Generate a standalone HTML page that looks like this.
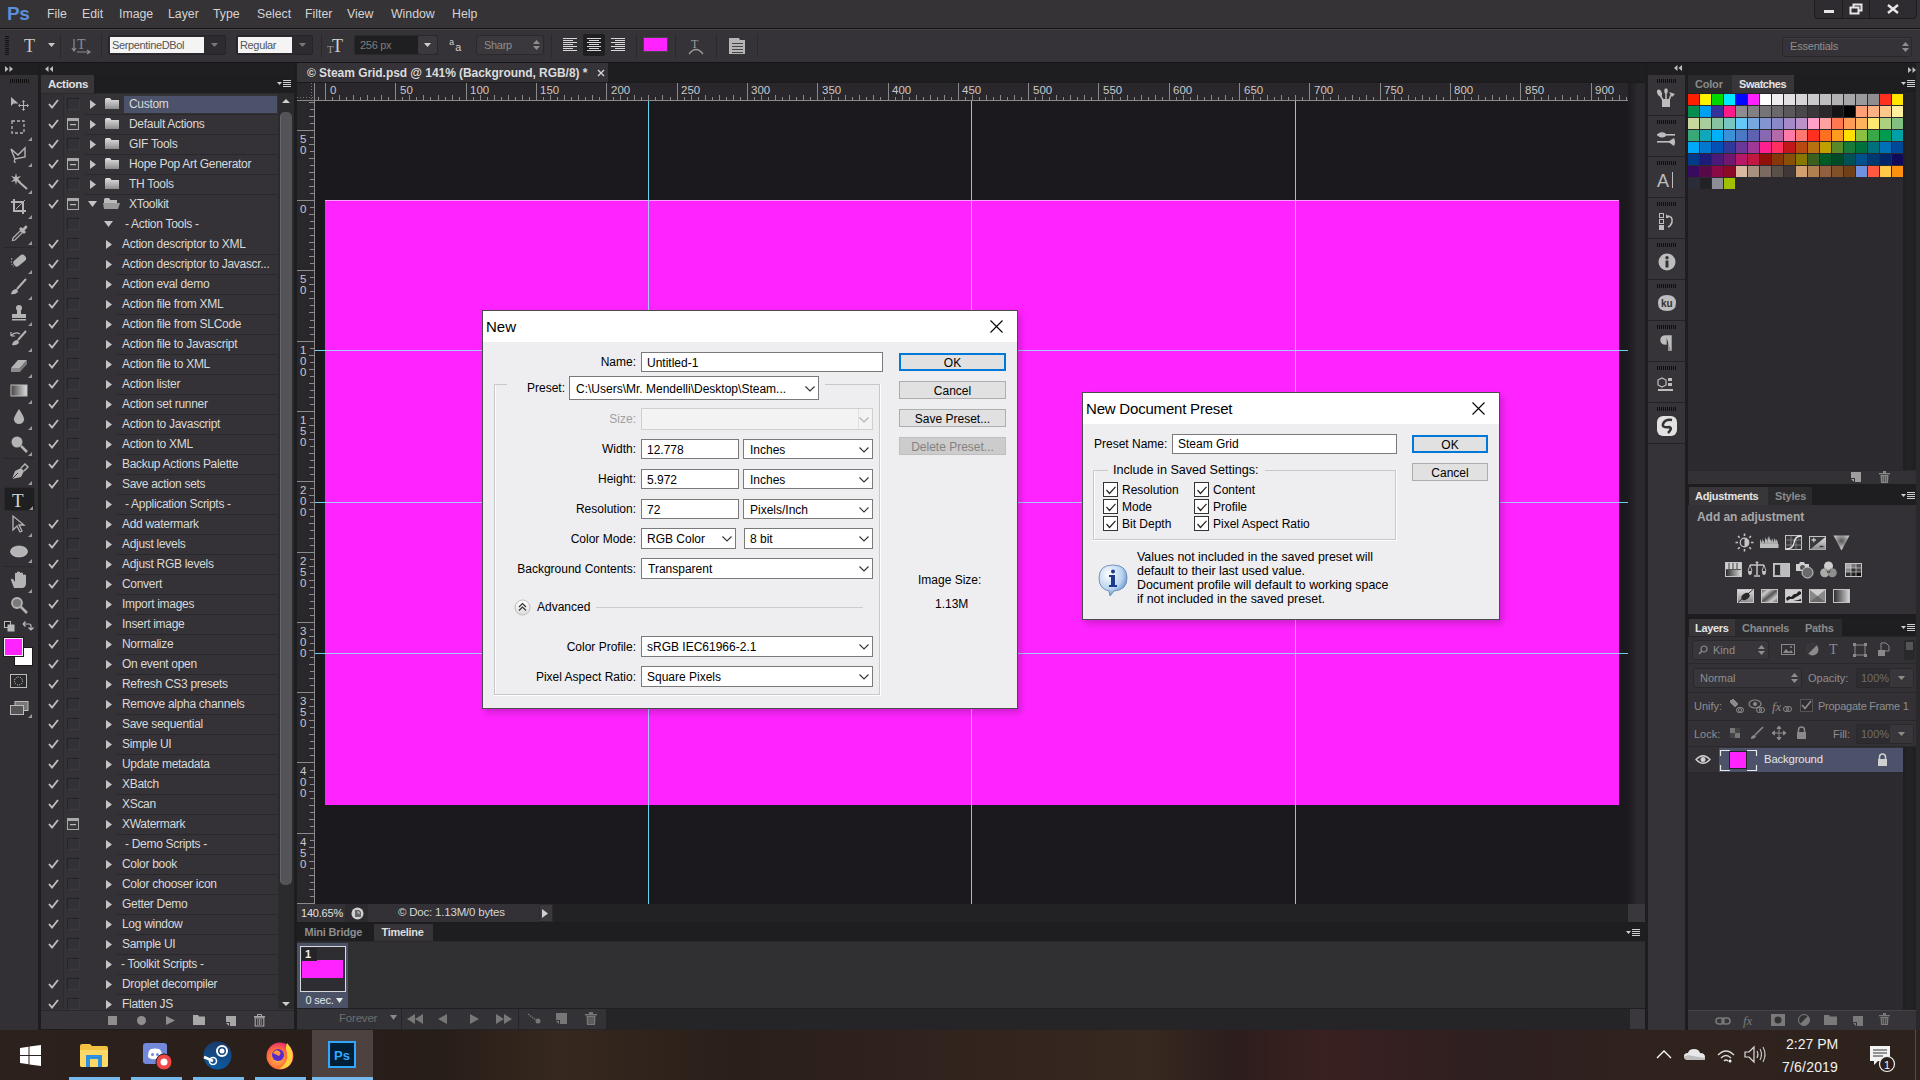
<!DOCTYPE html><html><head><meta charset="utf-8"><style>

*{margin:0;padding:0;box-sizing:border-box}
html,body{width:1920px;height:1080px;overflow:hidden;background:#323035;font-family:"Liberation Sans",sans-serif;}
.ab{position:absolute}
.t{position:absolute;white-space:nowrap;line-height:1}
svg{position:absolute;overflow:visible}

</style></head><body>
<div class="ab" style="left:0px;top:0px;width:1920px;height:28px;background:#353336;"></div>
<div class="ab" style="left:0px;top:28px;width:1920px;height:1px;background:#151316;"></div>
<div class="t" style="left:7px;top:3.92px;font-size:19px;color:#5c8fd8;font-weight:bold;letter-spacing:-0.5px">Ps</div>
<div class="t" style="left:47px;top:7.59px;font-size:12.3px;color:#d4d4d4;">File</div>
<div class="t" style="left:82px;top:7.59px;font-size:12.3px;color:#d4d4d4;">Edit</div>
<div class="t" style="left:119px;top:7.59px;font-size:12.3px;color:#d4d4d4;">Image</div>
<div class="t" style="left:168px;top:7.59px;font-size:12.3px;color:#d4d4d4;">Layer</div>
<div class="t" style="left:213px;top:7.59px;font-size:12.3px;color:#d4d4d4;">Type</div>
<div class="t" style="left:257px;top:7.59px;font-size:12.3px;color:#d4d4d4;">Select</div>
<div class="t" style="left:305px;top:7.59px;font-size:12.3px;color:#d4d4d4;">Filter</div>
<div class="t" style="left:347px;top:7.59px;font-size:12.3px;color:#d4d4d4;">View</div>
<div class="t" style="left:391px;top:7.59px;font-size:12.3px;color:#d4d4d4;">Window</div>
<div class="t" style="left:452px;top:7.59px;font-size:12.3px;color:#d4d4d4;">Help</div>
<div class="ab" style="left:1814px;top:0px;width:103px;height:19px;background:#2e2c30;border:1px solid #1c1b1e;border-top:none;border-radius:0 0 4px 4px"></div>
<div class="ab" style="left:1842px;top:0px;width:1px;height:18px;background:#1c1b1e;"></div>
<div class="ab" style="left:1869px;top:0px;width:1px;height:18px;background:#1c1b1e;"></div>
<div class="ab" style="left:1824px;top:10px;width:10px;height:3px;background:#e6e6e6;"></div>
<svg style="left:1849px;top:3px;" width="14" height="12" viewBox="0 0 14 12"><rect x="1.5" y="4.5" width="8" height="6" fill="none" stroke="#e6e6e6" stroke-width="2"/><path d="M4.5 4.5V1.5h8v6h-3" fill="none" stroke="#e6e6e6" stroke-width="2"/></svg>
<svg style="left:1887px;top:4px;" width="12" height="10" viewBox="0 0 12 10"><path d="M1 1L11 9M11 1L1 9" stroke="#e6e6e6" stroke-width="2.4"/></svg>
<div class="ab" style="left:0px;top:29px;width:1920px;height:33px;background:#353337;"></div>
<div class="ab" style="left:0px;top:29px;width:1920px;height:1px;background:#46444a;"></div>
<div class="ab" style="left:0px;top:62px;width:1920px;height:1px;background:#161417;"></div>
<div class="ab" style="left:5px;top:36px;width:4px;height:1px;background:#111;"></div>
<div class="ab" style="left:5px;top:38px;width:4px;height:1px;background:#111;"></div>
<div class="ab" style="left:5px;top:40px;width:4px;height:1px;background:#111;"></div>
<div class="ab" style="left:5px;top:42px;width:4px;height:1px;background:#111;"></div>
<div class="ab" style="left:5px;top:44px;width:4px;height:1px;background:#111;"></div>
<div class="ab" style="left:5px;top:46px;width:4px;height:1px;background:#111;"></div>
<div class="ab" style="left:5px;top:48px;width:4px;height:1px;background:#111;"></div>
<div class="ab" style="left:5px;top:50px;width:4px;height:1px;background:#111;"></div>
<div class="ab" style="left:5px;top:52px;width:4px;height:1px;background:#111;"></div>
<div class="ab" style="left:5px;top:54px;width:4px;height:1px;background:#111;"></div>
<div class="t" style="left:24px;top:36.76px;font-size:18px;color:#c9c9c9;font-family:'Liberation Serif',serif">T</div>
<svg style="left:48px;top:43px;" width="8" height="5" viewBox="0 0 8 5"><path d="M0 0H7L3.5 4Z" fill="#c9c9c9"/></svg>
<div class="ab" style="left:60px;top:34px;width:1px;height:24px;background:#2a292c;"></div>
<svg style="left:72px;top:37px;" width="20" height="18" viewBox="0 0 20 18"><text x="5" y="12" font-family="Liberation Serif" font-size="14" fill="#8c8c8c">T</text><path d="M2 2V13M0 11L2 14L4 11M5 15H17M15 13L18 15L15 17" stroke="#8c8c8c" stroke-width="1.2" fill="none"/></svg>
<div class="ab" style="left:101px;top:34px;width:1px;height:24px;background:#2a292c;"></div>
<div class="ab" style="left:108px;top:35px;width:118px;height:20px;background:#2d2b2f;border:1px solid #262428;border-radius:2px"></div>
<div class="ab" style="left:110px;top:37px;width:94px;height:16px;background:#f4f4f4;"></div>
<div class="t" style="left:112px;top:39.69px;font-size:11px;color:#545454;letter-spacing:-0.35px">SerpentineDBol</div>
<svg style="left:211px;top:43px;" width="8" height="5" viewBox="0 0 8 5"><path d="M0 0H7L3.5 4Z" fill="#777"/></svg>
<div class="ab" style="left:236px;top:35px;width:77px;height:20px;background:#2d2b2f;border:1px solid #262428;border-radius:2px"></div>
<div class="ab" style="left:238px;top:37px;width:54px;height:16px;background:#f4f4f4;"></div>
<div class="t" style="left:240px;top:39.69px;font-size:11px;color:#545454;letter-spacing:-0.35px">Regular</div>
<svg style="left:299px;top:43px;" width="8" height="5" viewBox="0 0 8 5"><path d="M0 0H7L3.5 4Z" fill="#777"/></svg>
<div class="ab" style="left:321px;top:34px;width:1px;height:24px;background:#2a292c;"></div>
<svg style="left:327px;top:37px;" width="20" height="18" viewBox="0 0 20 18"><text x="0" y="16" font-family="Liberation Serif" font-size="11" fill="#9a9a9a">T</text><text x="5" y="15" font-family="Liberation Serif" font-size="18" fill="#cfcfcf">T</text></svg>
<div class="ab" style="left:354px;top:35px;width:84px;height:20px;background:#1f1e21;border:1px solid #29282b;border-radius:2px"></div>
<div class="ab" style="left:418px;top:36px;width:19px;height:18px;background:#3b393d;border-radius:2px"></div>
<div class="t" style="left:360px;top:39.69px;font-size:11px;color:#7e7e7e;letter-spacing:-0.3px">256 px</div>
<svg style="left:424px;top:43px;" width="8" height="5" viewBox="0 0 8 5"><path d="M0 0H7L3.5 4Z" fill="#d0d0d0"/></svg>
<svg style="left:449px;top:38px;" width="16" height="14" viewBox="0 0 16 14"><text x="0" y="7" font-family="Liberation Mono" font-size="9" fill="#d0d0d0">a</text><text x="6" y="13" font-family="Liberation Mono" font-size="11" fill="#d0d0d0">a</text></svg>
<div class="ab" style="left:476px;top:35px;width:68px;height:20px;background:#3a383c;border:1px solid #29282b;border-radius:3px"></div>
<div class="t" style="left:484px;top:39.69px;font-size:11px;color:#8e8e8e;letter-spacing:-0.3px">Sharp</div>
<svg style="left:533px;top:40px;" width="8" height="11" viewBox="0 0 8 11"><path d="M0 4L3.5 0L7 4ZM0 6L3.5 10L7 6Z" fill="#8e8e8e"/></svg>
<div class="ab" style="left:551px;top:34px;width:1px;height:24px;background:#2a292c;"></div>
<div class="ab" style="left:583px;top:34px;width:22px;height:22px;background:#1f1e21;border-radius:2px"></div>
<svg style="left:563px;top:38px;" width="15" height="14" viewBox="0 0 15 14"><rect x="0" y="0" width="14" height="1" fill="#d8d8d8"/><rect x="0" y="2" width="10" height="1" fill="#d8d8d8"/><rect x="0" y="4" width="14" height="1" fill="#d8d8d8"/><rect x="0" y="6" width="10" height="1" fill="#d8d8d8"/><rect x="0" y="8" width="14" height="1" fill="#d8d8d8"/><rect x="0" y="10" width="10" height="1" fill="#d8d8d8"/><rect x="0" y="12" width="14" height="1" fill="#d8d8d8"/></svg>
<svg style="left:587px;top:38px;" width="15" height="14" viewBox="0 0 15 14"><rect x="0" y="0" width="14" height="1" fill="#d8d8d8"/><rect x="2" y="2" width="10" height="1" fill="#d8d8d8"/><rect x="0" y="4" width="14" height="1" fill="#d8d8d8"/><rect x="2" y="6" width="10" height="1" fill="#d8d8d8"/><rect x="0" y="8" width="14" height="1" fill="#d8d8d8"/><rect x="2" y="10" width="10" height="1" fill="#d8d8d8"/><rect x="0" y="12" width="14" height="1" fill="#d8d8d8"/></svg>
<svg style="left:611px;top:38px;" width="15" height="14" viewBox="0 0 15 14"><rect x="0" y="0" width="14" height="1" fill="#d8d8d8"/><rect x="4" y="2" width="10" height="1" fill="#d8d8d8"/><rect x="0" y="4" width="14" height="1" fill="#d8d8d8"/><rect x="4" y="6" width="10" height="1" fill="#d8d8d8"/><rect x="0" y="8" width="14" height="1" fill="#d8d8d8"/><rect x="4" y="10" width="10" height="1" fill="#d8d8d8"/><rect x="0" y="12" width="14" height="1" fill="#d8d8d8"/></svg>
<div class="ab" style="left:636px;top:34px;width:1px;height:24px;background:#2a292c;"></div>
<div class="ab" style="left:643px;top:37px;width:25px;height:15px;background:#ff24ff;border:1px solid #444"></div>
<div class="ab" style="left:675px;top:34px;width:1px;height:24px;background:#2a292c;"></div>
<svg style="left:687px;top:37px;" width="18" height="18" viewBox="0 0 18 18"><text x="4" y="11" font-family="Liberation Serif" font-size="12" fill="#9a9a9a">T</text><path d="M2 17Q9 8 16 17" stroke="#9a9a9a" stroke-width="1.3" fill="none"/></svg>
<div class="ab" style="left:716px;top:34px;width:1px;height:24px;background:#2a292c;"></div>
<svg style="left:728px;top:37px;" width="18" height="18" viewBox="0 0 18 18"><path d="M1 1H11L12 3H17V17H1Z" fill="#b5b5b5"/><rect x="4" y="6" width="11" height="1" fill="#444"/><rect x="4" y="9" width="11" height="1" fill="#444"/><rect x="4" y="12" width="11" height="1" fill="#444"/><rect x="4" y="15" width="11" height="1" fill="#444"/></svg>
<div class="ab" style="left:757px;top:34px;width:1px;height:24px;background:#2a292c;"></div>
<div class="ab" style="left:1782px;top:37px;width:130px;height:20px;background:#353337;border:1px solid #28272a;border-radius:3px;box-shadow:inset 0 1px 0 #3e3c40"></div>
<div class="t" style="left:1790px;top:41.19px;font-size:11px;color:#8f8f8f;letter-spacing:-0.2px">Essentials</div>
<svg style="left:1902px;top:42px;" width="7" height="11" viewBox="0 0 7 11"><path d="M0 4L3.5 0L7 4ZM0 6L3.5 10L7 6Z" fill="#8e8e8e"/></svg>
<div class="ab" style="left:0px;top:63px;width:297px;height:12px;background:#1f1e21;"></div>
<svg style="left:5px;top:66px;" width="9" height="6" viewBox="0 0 9 6"><path d="M0 0L3.5 3L0 6ZM4.5 0L8 3L4.5 6Z" fill="#bdbdbd"/></svg>
<svg style="left:45px;top:66px;" width="9" height="6" viewBox="0 0 9 6"><path d="M3.5 0L0 3L3.5 6ZM8 0L4.5 3L8 6Z" fill="#bdbdbd"/></svg>
<div class="ab" style="left:1648px;top:63px;width:272px;height:12px;background:#1f1e21;"></div>
<svg style="left:1674px;top:65px;" width="9" height="6" viewBox="0 0 9 6"><path d="M3.5 0L0 3L3.5 6ZM8 0L4.5 3L8 6Z" fill="#bdbdbd"/></svg>
<svg style="left:1908px;top:67px;" width="9" height="6" viewBox="0 0 9 6"><path d="M0 0L3.5 3L0 6ZM4.5 0L8 3L4.5 6Z" fill="#bdbdbd"/></svg>
<div class="ab" style="left:0px;top:75px;width:38px;height:955px;background:#323035;"></div>
<div class="ab" style="left:38px;top:63px;width:3px;height:967px;background:#1d1c1f;"></div>
<div class="ab" style="left:10px;top:79px;width:1px;height:4px;background:#0e0e0e;"></div>
<div class="ab" style="left:12px;top:79px;width:1px;height:4px;background:#0e0e0e;"></div>
<div class="ab" style="left:14px;top:79px;width:1px;height:4px;background:#0e0e0e;"></div>
<div class="ab" style="left:16px;top:79px;width:1px;height:4px;background:#0e0e0e;"></div>
<div class="ab" style="left:18px;top:79px;width:1px;height:4px;background:#0e0e0e;"></div>
<div class="ab" style="left:20px;top:79px;width:1px;height:4px;background:#0e0e0e;"></div>
<div class="ab" style="left:22px;top:79px;width:1px;height:4px;background:#0e0e0e;"></div>
<div class="ab" style="left:24px;top:79px;width:1px;height:4px;background:#0e0e0e;"></div>
<div class="ab" style="left:26px;top:79px;width:1px;height:4px;background:#0e0e0e;"></div>
<div class="ab" style="left:28px;top:79px;width:1px;height:4px;background:#0e0e0e;"></div>
<svg style="left:10px;top:96px;" width="20" height="16" viewBox="0 0 20 16"><path d="M1 1V10L3.5 7.5H8.5Z" fill="#b4b4b4"/><path d="M13.5 5V14M9 9.5H18" stroke="#b4b4b4" stroke-width="1.1"/><path d="M13.5 4L11.8 6H15.2ZM13.5 15L11.8 13H15.2ZM8 9.5L10 7.8V11.2ZM19 9.5L17 7.8V11.2Z" fill="#b4b4b4"/></svg>
<svg style="left:11px;top:120px;" width="15" height="15" viewBox="0 0 15 15"><rect x="1" y="1" width="12" height="12" fill="none" stroke="#b4b4b4" stroke-width="1.3" stroke-dasharray="3 2"/></svg>
<svg style="left:28px;top:137px;" width="4" height="4" viewBox="0 0 4 4"><path d="M4 0V4H0Z" fill="#9a9a9a"/></svg>
<svg style="left:10px;top:146px;" width="18" height="17" viewBox="0 0 18 17"><path d="M1 3L8 9L15 2L15 11L5 13Z" fill="none" stroke="#b4b4b4" stroke-width="1.4"/><path d="M5 13Q3 17 6 16" fill="none" stroke="#b4b4b4" stroke-width="1.2"/></svg>
<svg style="left:28px;top:163px;" width="4" height="4" viewBox="0 0 4 4"><path d="M4 0V4H0Z" fill="#9a9a9a"/></svg>
<svg style="left:9px;top:172px;" width="20" height="18" viewBox="0 0 20 18"><path d="M7 1L8 5L12 4L9 7L12 10L8 9L7 13L6 9L2 10L5 7L2 4L6 5Z" fill="#b4b4b4"/><path d="M9 9L18 17" stroke="#b4b4b4" stroke-width="2"/></svg>
<svg style="left:28px;top:190px;" width="4" height="4" viewBox="0 0 4 4"><path d="M4 0V4H0Z" fill="#9a9a9a"/></svg>
<svg style="left:10px;top:198px;" width="18" height="17" viewBox="0 0 18 17"><path d="M4 1V13H16M1 4H13V16" fill="none" stroke="#b4b4b4" stroke-width="2"/><path d="M6 11L15 2" stroke="#b4b4b4" stroke-width="1"/></svg>
<svg style="left:28px;top:215px;" width="4" height="4" viewBox="0 0 4 4"><path d="M4 0V4H0Z" fill="#9a9a9a"/></svg>
<svg style="left:11px;top:224px;" width="17" height="17" viewBox="0 0 17 17"><path d="M2 14L9.5 6.5L11.5 8.5L4 16L1.5 16.5Z" fill="none" stroke="#b4b4b4" stroke-width="1.2"/><path d="M8 5L10 3L15 8L13 10Z" fill="#b4b4b4"/><path d="M11 5L13.5 2.5Q15 1 16 2Q17 3 15.5 4.5L13 7Z" fill="#b4b4b4"/></svg>
<svg style="left:28px;top:241px;" width="4" height="4" viewBox="0 0 4 4"><path d="M4 0V4H0Z" fill="#9a9a9a"/></svg>
<div class="ab" style="left:4px;top:247px;width:31px;height:1px;background:#28272a;"></div>
<svg style="left:9px;top:252px;" width="20" height="18" viewBox="0 0 20 18"><rect x="4" y="5" width="14" height="7" rx="3" transform="rotate(-40 11 9)" fill="#b4b4b4"/><path d="M3 6Q1 12 5 15" fill="none" stroke="#b4b4b4" stroke-width="1" stroke-dasharray="1.5 1.5"/></svg>
<svg style="left:28px;top:270px;" width="4" height="4" viewBox="0 0 4 4"><path d="M4 0V4H0Z" fill="#9a9a9a"/></svg>
<svg style="left:9px;top:278px;" width="20" height="18" viewBox="0 0 20 18"><path d="M17 1L8 11" stroke="#b4b4b4" stroke-width="2"/><path d="M8 11Q3 11 2 16Q6 17 9 14Z" fill="#b4b4b4"/></svg>
<svg style="left:28px;top:296px;" width="4" height="4" viewBox="0 0 4 4"><path d="M4 0V4H0Z" fill="#9a9a9a"/></svg>
<svg style="left:10px;top:304px;" width="18" height="18" viewBox="0 0 18 18"><circle cx="9" cy="4" r="3" fill="#b4b4b4"/><rect x="7" y="6" width="4" height="5" fill="#b4b4b4"/><rect x="2" y="10" width="14" height="4" fill="#b4b4b4"/><rect x="2" y="15" width="14" height="1.5" fill="#b4b4b4"/></svg>
<svg style="left:28px;top:322px;" width="4" height="4" viewBox="0 0 4 4"><path d="M4 0V4H0Z" fill="#9a9a9a"/></svg>
<svg style="left:9px;top:330px;" width="20" height="18" viewBox="0 0 20 18"><path d="M17 1L9 10" stroke="#b4b4b4" stroke-width="2"/><path d="M9 10Q4 10 3 15Q7 16 10 13Z" fill="#b4b4b4"/><path d="M2 6Q6 1 11 4M2 6L2 2M2 6L6 6" fill="none" stroke="#b4b4b4" stroke-width="1.2"/></svg>
<svg style="left:28px;top:348px;" width="4" height="4" viewBox="0 0 4 4"><path d="M4 0V4H0Z" fill="#9a9a9a"/></svg>
<svg style="left:10px;top:357px;" width="18" height="16" viewBox="0 0 18 16"><path d="M1 11L8 3H17L10 11Z" fill="#b4b4b4"/><path d="M1 11H10V15H1Z" fill="#8a8a8a"/><path d="M10 11L17 3V7L10 15Z" fill="#7a7a7a"/></svg>
<svg style="left:28px;top:374px;" width="4" height="4" viewBox="0 0 4 4"><path d="M4 0V4H0Z" fill="#9a9a9a"/></svg>
<svg style="left:10px;top:384px;" width="18" height="14" viewBox="0 0 18 14"><defs><linearGradient id="gr" x1="0" x2="1"><stop offset="0" stop-color="#444"/><stop offset="1" stop-color="#ddd"/></linearGradient></defs><rect x="1" y="1" width="16" height="11" fill="url(#gr)" stroke="#bbb" stroke-width="1"/></svg>
<svg style="left:28px;top:400px;" width="4" height="4" viewBox="0 0 4 4"><path d="M4 0V4H0Z" fill="#9a9a9a"/></svg>
<svg style="left:12px;top:408px;" width="14" height="17" viewBox="0 0 14 17"><path d="M7 1Q1 10 2 12Q3 16 7 16Q11 16 12 12Q13 10 7 1Z" fill="#b4b4b4"/></svg>
<svg style="left:28px;top:426px;" width="4" height="4" viewBox="0 0 4 4"><path d="M4 0V4H0Z" fill="#9a9a9a"/></svg>
<svg style="left:10px;top:435px;" width="19" height="18" viewBox="0 0 19 18"><circle cx="7" cy="7" r="5.5" fill="#b4b4b4"/><path d="M11 11L17 17" stroke="#b4b4b4" stroke-width="2.5"/></svg>
<svg style="left:28px;top:452px;" width="4" height="4" viewBox="0 0 4 4"><path d="M4 0V4H0Z" fill="#9a9a9a"/></svg>
<div class="ab" style="left:4px;top:458px;width:31px;height:1px;background:#28272a;"></div>
<svg style="left:10px;top:463px;" width="19" height="18" viewBox="0 0 19 18"><path d="M2 16L5 8L11 5L14 8L11 14Z" fill="#b4b4b4"/><path d="M11 5L15 1L18 4L14 8" fill="none" stroke="#b4b4b4" stroke-width="1.5"/><path d="M2 16L8 10" stroke="#333" stroke-width="1"/></svg>
<svg style="left:28px;top:481px;" width="4" height="4" viewBox="0 0 4 4"><path d="M4 0V4H0Z" fill="#9a9a9a"/></svg>
<div class="ab" style="left:4px;top:487px;width:31px;height:24px;background:#1f1e21;border-radius:2px;border:1px solid #2a292c"></div>
<div class="t" style="left:12px;top:490.92px;font-size:19px;color:#d6d6d6;font-family:'Liberation Serif',serif">T</div>
<svg style="left:29px;top:506px;" width="4" height="4" viewBox="0 0 4 4"><path d="M4 0V4H0Z" fill="#9a9a9a"/></svg>
<svg style="left:12px;top:515px;" width="14" height="18" viewBox="0 0 14 18"><path d="M1 1V15L5 11L8 17L10 16L7 10L12 10Z" fill="none" stroke="#b4b4b4" stroke-width="1.3"/></svg>
<svg style="left:28px;top:533px;" width="4" height="4" viewBox="0 0 4 4"><path d="M4 0V4H0Z" fill="#9a9a9a"/></svg>
<svg style="left:9px;top:545px;" width="20" height="13" viewBox="0 0 20 13"><ellipse cx="10" cy="6.5" rx="8.5" ry="5.5" fill="#b4b4b4" stroke="#ddd" stroke-width="0.6"/></svg>
<svg style="left:28px;top:559px;" width="4" height="4" viewBox="0 0 4 4"><path d="M4 0V4H0Z" fill="#9a9a9a"/></svg>
<div class="ab" style="left:4px;top:566px;width:31px;height:1px;background:#28272a;"></div>
<svg style="left:10px;top:571px;" width="19" height="18" viewBox="0 0 19 18"><path d="M4 17L1 9Q1 7 3 8L5 11V3Q5 1 7 2V9V1Q8 0 10 1V9V2Q11 1 13 2V10V4Q14 3 16 4V12Q16 16 13 17Z" fill="#b4b4b4"/></svg>
<svg style="left:28px;top:589px;" width="4" height="4" viewBox="0 0 4 4"><path d="M4 0V4H0Z" fill="#9a9a9a"/></svg>
<svg style="left:10px;top:596px;" width="19" height="18" viewBox="0 0 19 18"><circle cx="7" cy="7" r="5" fill="#7a7a7a" stroke="#b4b4b4" stroke-width="1.8"/><path d="M11 11L17 17" stroke="#b4b4b4" stroke-width="2.5"/></svg>
<svg style="left:4px;top:621px;" width="11" height="11" viewBox="0 0 11 11"><rect x="0.5" y="0.5" width="6" height="6" fill="#222" stroke="#bbb"/><rect x="4" y="4" width="6" height="6" fill="#bbb" stroke="#bbb"/></svg>
<svg style="left:22px;top:620px;" width="11" height="12" viewBox="0 0 11 12"><path d="M1 4H7Q9 4 9 6V10M1 4L3.5 1.5M1 4L3.5 6.5M9 10L6.5 7.5M9 10L11.5 7.5" fill="none" stroke="#bbb" stroke-width="1.2"/></svg>
<div class="ab" style="left:14px;top:647px;width:19px;height:19px;background:#ffffff;border:1px solid #1a1a1a"></div>
<div class="ab" style="left:4px;top:638px;width:19px;height:18px;background:#ff24ff;border:1px solid #f0f0f0;outline:1px solid #1a1a1a"></div>
<svg style="left:10px;top:674px;" width="17" height="14" viewBox="0 0 17 14"><rect x="0.5" y="0.5" width="16" height="13" fill="#2a292c" stroke="#bbb"/><circle cx="8.5" cy="7" r="4" fill="none" stroke="#ddd" stroke-dasharray="1 1.2"/></svg>
<svg style="left:10px;top:701px;" width="19" height="15" viewBox="0 0 19 15"><rect x="5" y="0.5" width="13" height="9" fill="#777" stroke="#bbb"/><rect x="0.5" y="4.5" width="13" height="9" fill="#555" stroke="#bbb"/></svg>
<svg style="left:28px;top:714px;" width="4" height="4" viewBox="0 0 4 4"><path d="M4 0V4H0Z" fill="#9a9a9a"/></svg>
<div class="ab" style="left:41px;top:75px;width:253px;height:955px;background:#343236;"></div>
<div class="ab" style="left:94px;top:75px;width:200px;height:18px;background:#1e1d20;"></div>
<div class="ab" style="left:41px;top:75px;width:53px;height:18px;background:#383639;"></div>
<div class="t" style="left:48px;top:79.07px;font-size:11.5px;color:#e0e0e0;font-weight:bold;letter-spacing:-0.3px">Actions</div>
<svg style="left:277px;top:80px;" width="14" height="9" viewBox="0 0 14 9"><path d="M0 2H5L2.5 5Z" fill="#cfcfcf"/><rect x="6" y="0" width="8" height="1" fill="#cfcfcf"/><rect x="6" y="2" width="8" height="1" fill="#cfcfcf"/><rect x="6" y="4" width="8" height="1" fill="#cfcfcf"/><rect x="6" y="6" width="8" height="1" fill="#cfcfcf"/></svg>
<div class="ab" style="left:41px;top:93px;width:253px;height:1px;background:#2a292c;"></div>
<div class="ab" style="left:41px;top:94px;width:22px;height:915px;background:#323035;"></div>
<div class="ab" style="left:63px;top:94px;width:1px;height:915px;background:#2b2a2d;"></div>
<div class="ab" style="left:124px;top:96px;width:153px;height:17px;background:#4b5269;"></div>
<div class="ab" style="left:85px;top:114px;width:192px;height:1px;background:#28272a;"></div>
<svg style="left:48px;top:99px;" width="11" height="10" viewBox="0 0 11 10"><path d="M1 5L4 8.5L10 1" fill="none" stroke="#bdbdbd" stroke-width="1.9"/></svg>
<div class="ab" style="left:67px;top:98px;width:13px;height:12px;background:#323135;border:1px solid #242327;border-right-color:#3a393d;border-bottom-color:#3a393d"></div>
<svg style="left:90px;top:100px;" width="7" height="10" viewBox="0 0 7 10"><path d="M0 0L6 4.5L0 9Z" fill="#c4c4c4"/></svg>
<svg style="left:105px;top:98px;" width="15" height="12" viewBox="0 0 15 12"><defs><linearGradient id="fg" x1="0" y1="0" x2="0" y2="1"><stop offset="0" stop-color="#e0e0e0"/><stop offset="1" stop-color="#8e8e8e"/></linearGradient></defs><path d="M0 1.5Q0 0 1.5 0H5L6.5 2H14V11H0Z" fill="url(#fg)"/></svg>
<div class="t" style="left:129px;top:98.34px;font-size:12px;color:#d9d9d9;letter-spacing:-0.3px">Custom</div>
<div class="ab" style="left:85px;top:134px;width:192px;height:1px;background:#28272a;"></div>
<svg style="left:48px;top:119px;" width="11" height="10" viewBox="0 0 11 10"><path d="M1 5L4 8.5L10 1" fill="none" stroke="#bdbdbd" stroke-width="1.9"/></svg>
<svg style="left:67px;top:118px;" width="13" height="12" viewBox="0 0 13 12"><rect x="0.5" y="0.5" width="11" height="11" fill="#3a393d" stroke="#aaa"/><rect x="0.5" y="0.5" width="11" height="2.5" fill="#aaa"/><rect x="3" y="6" width="6" height="1.2" fill="#bbb"/></svg>
<svg style="left:90px;top:120px;" width="7" height="10" viewBox="0 0 7 10"><path d="M0 0L6 4.5L0 9Z" fill="#c4c4c4"/></svg>
<svg style="left:105px;top:118px;" width="15" height="12" viewBox="0 0 15 12"><defs><linearGradient id="fg" x1="0" y1="0" x2="0" y2="1"><stop offset="0" stop-color="#e0e0e0"/><stop offset="1" stop-color="#8e8e8e"/></linearGradient></defs><path d="M0 1.5Q0 0 1.5 0H5L6.5 2H14V11H0Z" fill="url(#fg)"/></svg>
<div class="t" style="left:129px;top:118.34px;font-size:12px;color:#d9d9d9;letter-spacing:-0.3px">Default Actions</div>
<div class="ab" style="left:85px;top:154px;width:192px;height:1px;background:#28272a;"></div>
<svg style="left:48px;top:139px;" width="11" height="10" viewBox="0 0 11 10"><path d="M1 5L4 8.5L10 1" fill="none" stroke="#bdbdbd" stroke-width="1.9"/></svg>
<div class="ab" style="left:67px;top:138px;width:13px;height:12px;background:#323135;border:1px solid #242327;border-right-color:#3a393d;border-bottom-color:#3a393d"></div>
<svg style="left:90px;top:140px;" width="7" height="10" viewBox="0 0 7 10"><path d="M0 0L6 4.5L0 9Z" fill="#c4c4c4"/></svg>
<svg style="left:105px;top:138px;" width="15" height="12" viewBox="0 0 15 12"><defs><linearGradient id="fg" x1="0" y1="0" x2="0" y2="1"><stop offset="0" stop-color="#e0e0e0"/><stop offset="1" stop-color="#8e8e8e"/></linearGradient></defs><path d="M0 1.5Q0 0 1.5 0H5L6.5 2H14V11H0Z" fill="url(#fg)"/></svg>
<div class="t" style="left:129px;top:138.34px;font-size:12px;color:#d9d9d9;letter-spacing:-0.3px">GIF Tools</div>
<div class="ab" style="left:85px;top:174px;width:192px;height:1px;background:#28272a;"></div>
<svg style="left:48px;top:159px;" width="11" height="10" viewBox="0 0 11 10"><path d="M1 5L4 8.5L10 1" fill="none" stroke="#bdbdbd" stroke-width="1.9"/></svg>
<svg style="left:67px;top:158px;" width="13" height="12" viewBox="0 0 13 12"><rect x="0.5" y="0.5" width="11" height="11" fill="#3a393d" stroke="#aaa"/><rect x="0.5" y="0.5" width="11" height="2.5" fill="#aaa"/><rect x="3" y="6" width="6" height="1.2" fill="#bbb"/></svg>
<svg style="left:90px;top:160px;" width="7" height="10" viewBox="0 0 7 10"><path d="M0 0L6 4.5L0 9Z" fill="#c4c4c4"/></svg>
<svg style="left:105px;top:158px;" width="15" height="12" viewBox="0 0 15 12"><defs><linearGradient id="fg" x1="0" y1="0" x2="0" y2="1"><stop offset="0" stop-color="#e0e0e0"/><stop offset="1" stop-color="#8e8e8e"/></linearGradient></defs><path d="M0 1.5Q0 0 1.5 0H5L6.5 2H14V11H0Z" fill="url(#fg)"/></svg>
<div class="t" style="left:129px;top:158.34px;font-size:12px;color:#d9d9d9;letter-spacing:-0.3px">Hope Pop Art Generator</div>
<div class="ab" style="left:85px;top:194px;width:192px;height:1px;background:#28272a;"></div>
<svg style="left:48px;top:179px;" width="11" height="10" viewBox="0 0 11 10"><path d="M1 5L4 8.5L10 1" fill="none" stroke="#bdbdbd" stroke-width="1.9"/></svg>
<div class="ab" style="left:67px;top:178px;width:13px;height:12px;background:#323135;border:1px solid #242327;border-right-color:#3a393d;border-bottom-color:#3a393d"></div>
<svg style="left:90px;top:180px;" width="7" height="10" viewBox="0 0 7 10"><path d="M0 0L6 4.5L0 9Z" fill="#c4c4c4"/></svg>
<svg style="left:105px;top:178px;" width="15" height="12" viewBox="0 0 15 12"><defs><linearGradient id="fg" x1="0" y1="0" x2="0" y2="1"><stop offset="0" stop-color="#e0e0e0"/><stop offset="1" stop-color="#8e8e8e"/></linearGradient></defs><path d="M0 1.5Q0 0 1.5 0H5L6.5 2H14V11H0Z" fill="url(#fg)"/></svg>
<div class="t" style="left:129px;top:178.34px;font-size:12px;color:#d9d9d9;letter-spacing:-0.3px">TH Tools</div>
<svg style="left:48px;top:199px;" width="11" height="10" viewBox="0 0 11 10"><path d="M1 5L4 8.5L10 1" fill="none" stroke="#bdbdbd" stroke-width="1.9"/></svg>
<svg style="left:67px;top:198px;" width="13" height="12" viewBox="0 0 13 12"><rect x="0.5" y="0.5" width="11" height="11" fill="#3a393d" stroke="#aaa"/><rect x="0.5" y="0.5" width="11" height="2.5" fill="#aaa"/><rect x="3" y="6" width="6" height="1.2" fill="#bbb"/></svg>
<svg style="left:88px;top:201px;" width="10" height="7" viewBox="0 0 10 7"><path d="M0 0H9L4.5 6Z" fill="#c4c4c4"/></svg>
<svg style="left:103px;top:198px;" width="17" height="12" viewBox="0 0 17 12"><path d="M1 1.5Q1 0 2.5 0H6L7.5 2H14V5H1Z" fill="#bbb"/><path d="M0 5H17L15 11H1Z" fill="#9a9a9a"/></svg>
<div class="t" style="left:129px;top:198.34px;font-size:12px;color:#d9d9d9;letter-spacing:-0.3px">XToolkit</div>
<div class="ab" style="left:67px;top:218px;width:13px;height:12px;background:#323135;border:1px solid #242327;border-right-color:#3a393d;border-bottom-color:#3a393d"></div>
<svg style="left:104px;top:221px;" width="10" height="7" viewBox="0 0 10 7"><path d="M0 0H9L4.5 6Z" fill="#c4c4c4"/></svg>
<div class="t" style="left:125px;top:218.34px;font-size:12px;color:#d9d9d9;letter-spacing:-0.3px">- Action Tools -</div>
<div class="ab" style="left:117px;top:254px;width:160px;height:1px;background:#28272a;"></div>
<svg style="left:48px;top:239px;" width="11" height="10" viewBox="0 0 11 10"><path d="M1 5L4 8.5L10 1" fill="none" stroke="#bdbdbd" stroke-width="1.9"/></svg>
<div class="ab" style="left:67px;top:238px;width:13px;height:12px;background:#323135;border:1px solid #242327;border-right-color:#3a393d;border-bottom-color:#3a393d"></div>
<svg style="left:106px;top:240px;" width="7" height="10" viewBox="0 0 7 10"><path d="M0 0L6 4.5L0 9Z" fill="#c4c4c4"/></svg>
<div class="t" style="left:122px;top:238.34px;font-size:12px;color:#d9d9d9;letter-spacing:-0.3px">Action descriptor to XML</div>
<div class="ab" style="left:117px;top:274px;width:160px;height:1px;background:#28272a;"></div>
<svg style="left:48px;top:259px;" width="11" height="10" viewBox="0 0 11 10"><path d="M1 5L4 8.5L10 1" fill="none" stroke="#bdbdbd" stroke-width="1.9"/></svg>
<div class="ab" style="left:67px;top:258px;width:13px;height:12px;background:#323135;border:1px solid #242327;border-right-color:#3a393d;border-bottom-color:#3a393d"></div>
<svg style="left:106px;top:260px;" width="7" height="10" viewBox="0 0 7 10"><path d="M0 0L6 4.5L0 9Z" fill="#c4c4c4"/></svg>
<div class="t" style="left:122px;top:258.34px;font-size:12px;color:#d9d9d9;letter-spacing:-0.3px">Action descriptor to Javascr...</div>
<div class="ab" style="left:117px;top:294px;width:160px;height:1px;background:#28272a;"></div>
<svg style="left:48px;top:279px;" width="11" height="10" viewBox="0 0 11 10"><path d="M1 5L4 8.5L10 1" fill="none" stroke="#bdbdbd" stroke-width="1.9"/></svg>
<div class="ab" style="left:67px;top:278px;width:13px;height:12px;background:#323135;border:1px solid #242327;border-right-color:#3a393d;border-bottom-color:#3a393d"></div>
<svg style="left:106px;top:280px;" width="7" height="10" viewBox="0 0 7 10"><path d="M0 0L6 4.5L0 9Z" fill="#c4c4c4"/></svg>
<div class="t" style="left:122px;top:278.34px;font-size:12px;color:#d9d9d9;letter-spacing:-0.3px">Action eval demo</div>
<div class="ab" style="left:117px;top:314px;width:160px;height:1px;background:#28272a;"></div>
<svg style="left:48px;top:299px;" width="11" height="10" viewBox="0 0 11 10"><path d="M1 5L4 8.5L10 1" fill="none" stroke="#bdbdbd" stroke-width="1.9"/></svg>
<div class="ab" style="left:67px;top:298px;width:13px;height:12px;background:#323135;border:1px solid #242327;border-right-color:#3a393d;border-bottom-color:#3a393d"></div>
<svg style="left:106px;top:300px;" width="7" height="10" viewBox="0 0 7 10"><path d="M0 0L6 4.5L0 9Z" fill="#c4c4c4"/></svg>
<div class="t" style="left:122px;top:298.34px;font-size:12px;color:#d9d9d9;letter-spacing:-0.3px">Action file from XML</div>
<div class="ab" style="left:117px;top:334px;width:160px;height:1px;background:#28272a;"></div>
<svg style="left:48px;top:319px;" width="11" height="10" viewBox="0 0 11 10"><path d="M1 5L4 8.5L10 1" fill="none" stroke="#bdbdbd" stroke-width="1.9"/></svg>
<div class="ab" style="left:67px;top:318px;width:13px;height:12px;background:#323135;border:1px solid #242327;border-right-color:#3a393d;border-bottom-color:#3a393d"></div>
<svg style="left:106px;top:320px;" width="7" height="10" viewBox="0 0 7 10"><path d="M0 0L6 4.5L0 9Z" fill="#c4c4c4"/></svg>
<div class="t" style="left:122px;top:318.34px;font-size:12px;color:#d9d9d9;letter-spacing:-0.3px">Action file from SLCode</div>
<div class="ab" style="left:117px;top:354px;width:160px;height:1px;background:#28272a;"></div>
<svg style="left:48px;top:339px;" width="11" height="10" viewBox="0 0 11 10"><path d="M1 5L4 8.5L10 1" fill="none" stroke="#bdbdbd" stroke-width="1.9"/></svg>
<div class="ab" style="left:67px;top:338px;width:13px;height:12px;background:#323135;border:1px solid #242327;border-right-color:#3a393d;border-bottom-color:#3a393d"></div>
<svg style="left:106px;top:340px;" width="7" height="10" viewBox="0 0 7 10"><path d="M0 0L6 4.5L0 9Z" fill="#c4c4c4"/></svg>
<div class="t" style="left:122px;top:338.34px;font-size:12px;color:#d9d9d9;letter-spacing:-0.3px">Action file to Javascript</div>
<div class="ab" style="left:117px;top:374px;width:160px;height:1px;background:#28272a;"></div>
<svg style="left:48px;top:359px;" width="11" height="10" viewBox="0 0 11 10"><path d="M1 5L4 8.5L10 1" fill="none" stroke="#bdbdbd" stroke-width="1.9"/></svg>
<div class="ab" style="left:67px;top:358px;width:13px;height:12px;background:#323135;border:1px solid #242327;border-right-color:#3a393d;border-bottom-color:#3a393d"></div>
<svg style="left:106px;top:360px;" width="7" height="10" viewBox="0 0 7 10"><path d="M0 0L6 4.5L0 9Z" fill="#c4c4c4"/></svg>
<div class="t" style="left:122px;top:358.34px;font-size:12px;color:#d9d9d9;letter-spacing:-0.3px">Action file to XML</div>
<div class="ab" style="left:117px;top:394px;width:160px;height:1px;background:#28272a;"></div>
<svg style="left:48px;top:379px;" width="11" height="10" viewBox="0 0 11 10"><path d="M1 5L4 8.5L10 1" fill="none" stroke="#bdbdbd" stroke-width="1.9"/></svg>
<div class="ab" style="left:67px;top:378px;width:13px;height:12px;background:#323135;border:1px solid #242327;border-right-color:#3a393d;border-bottom-color:#3a393d"></div>
<svg style="left:106px;top:380px;" width="7" height="10" viewBox="0 0 7 10"><path d="M0 0L6 4.5L0 9Z" fill="#c4c4c4"/></svg>
<div class="t" style="left:122px;top:378.34px;font-size:12px;color:#d9d9d9;letter-spacing:-0.3px">Action lister</div>
<div class="ab" style="left:117px;top:414px;width:160px;height:1px;background:#28272a;"></div>
<svg style="left:48px;top:399px;" width="11" height="10" viewBox="0 0 11 10"><path d="M1 5L4 8.5L10 1" fill="none" stroke="#bdbdbd" stroke-width="1.9"/></svg>
<div class="ab" style="left:67px;top:398px;width:13px;height:12px;background:#323135;border:1px solid #242327;border-right-color:#3a393d;border-bottom-color:#3a393d"></div>
<svg style="left:106px;top:400px;" width="7" height="10" viewBox="0 0 7 10"><path d="M0 0L6 4.5L0 9Z" fill="#c4c4c4"/></svg>
<div class="t" style="left:122px;top:398.34px;font-size:12px;color:#d9d9d9;letter-spacing:-0.3px">Action set runner</div>
<div class="ab" style="left:117px;top:434px;width:160px;height:1px;background:#28272a;"></div>
<svg style="left:48px;top:419px;" width="11" height="10" viewBox="0 0 11 10"><path d="M1 5L4 8.5L10 1" fill="none" stroke="#bdbdbd" stroke-width="1.9"/></svg>
<div class="ab" style="left:67px;top:418px;width:13px;height:12px;background:#323135;border:1px solid #242327;border-right-color:#3a393d;border-bottom-color:#3a393d"></div>
<svg style="left:106px;top:420px;" width="7" height="10" viewBox="0 0 7 10"><path d="M0 0L6 4.5L0 9Z" fill="#c4c4c4"/></svg>
<div class="t" style="left:122px;top:418.34px;font-size:12px;color:#d9d9d9;letter-spacing:-0.3px">Action to Javascript</div>
<div class="ab" style="left:117px;top:454px;width:160px;height:1px;background:#28272a;"></div>
<svg style="left:48px;top:439px;" width="11" height="10" viewBox="0 0 11 10"><path d="M1 5L4 8.5L10 1" fill="none" stroke="#bdbdbd" stroke-width="1.9"/></svg>
<div class="ab" style="left:67px;top:438px;width:13px;height:12px;background:#323135;border:1px solid #242327;border-right-color:#3a393d;border-bottom-color:#3a393d"></div>
<svg style="left:106px;top:440px;" width="7" height="10" viewBox="0 0 7 10"><path d="M0 0L6 4.5L0 9Z" fill="#c4c4c4"/></svg>
<div class="t" style="left:122px;top:438.34px;font-size:12px;color:#d9d9d9;letter-spacing:-0.3px">Action to XML</div>
<div class="ab" style="left:117px;top:474px;width:160px;height:1px;background:#28272a;"></div>
<svg style="left:48px;top:459px;" width="11" height="10" viewBox="0 0 11 10"><path d="M1 5L4 8.5L10 1" fill="none" stroke="#bdbdbd" stroke-width="1.9"/></svg>
<div class="ab" style="left:67px;top:458px;width:13px;height:12px;background:#323135;border:1px solid #242327;border-right-color:#3a393d;border-bottom-color:#3a393d"></div>
<svg style="left:106px;top:460px;" width="7" height="10" viewBox="0 0 7 10"><path d="M0 0L6 4.5L0 9Z" fill="#c4c4c4"/></svg>
<div class="t" style="left:122px;top:458.34px;font-size:12px;color:#d9d9d9;letter-spacing:-0.3px">Backup Actions Palette</div>
<div class="ab" style="left:117px;top:494px;width:160px;height:1px;background:#28272a;"></div>
<svg style="left:48px;top:479px;" width="11" height="10" viewBox="0 0 11 10"><path d="M1 5L4 8.5L10 1" fill="none" stroke="#bdbdbd" stroke-width="1.9"/></svg>
<div class="ab" style="left:67px;top:478px;width:13px;height:12px;background:#323135;border:1px solid #242327;border-right-color:#3a393d;border-bottom-color:#3a393d"></div>
<svg style="left:106px;top:480px;" width="7" height="10" viewBox="0 0 7 10"><path d="M0 0L6 4.5L0 9Z" fill="#c4c4c4"/></svg>
<div class="t" style="left:122px;top:478.34px;font-size:12px;color:#d9d9d9;letter-spacing:-0.3px">Save action sets</div>
<div class="ab" style="left:117px;top:514px;width:160px;height:1px;background:#28272a;"></div>
<div class="ab" style="left:67px;top:498px;width:13px;height:12px;background:#323135;border:1px solid #242327;border-right-color:#3a393d;border-bottom-color:#3a393d"></div>
<svg style="left:106px;top:500px;" width="7" height="10" viewBox="0 0 7 10"><path d="M0 0L6 4.5L0 9Z" fill="#c4c4c4"/></svg>
<div class="t" style="left:125px;top:498.34px;font-size:12px;color:#d9d9d9;letter-spacing:-0.3px">- Application Scripts -</div>
<div class="ab" style="left:117px;top:534px;width:160px;height:1px;background:#28272a;"></div>
<svg style="left:48px;top:519px;" width="11" height="10" viewBox="0 0 11 10"><path d="M1 5L4 8.5L10 1" fill="none" stroke="#bdbdbd" stroke-width="1.9"/></svg>
<div class="ab" style="left:67px;top:518px;width:13px;height:12px;background:#323135;border:1px solid #242327;border-right-color:#3a393d;border-bottom-color:#3a393d"></div>
<svg style="left:106px;top:520px;" width="7" height="10" viewBox="0 0 7 10"><path d="M0 0L6 4.5L0 9Z" fill="#c4c4c4"/></svg>
<div class="t" style="left:122px;top:518.34px;font-size:12px;color:#d9d9d9;letter-spacing:-0.3px">Add watermark</div>
<div class="ab" style="left:117px;top:554px;width:160px;height:1px;background:#28272a;"></div>
<svg style="left:48px;top:539px;" width="11" height="10" viewBox="0 0 11 10"><path d="M1 5L4 8.5L10 1" fill="none" stroke="#bdbdbd" stroke-width="1.9"/></svg>
<div class="ab" style="left:67px;top:538px;width:13px;height:12px;background:#323135;border:1px solid #242327;border-right-color:#3a393d;border-bottom-color:#3a393d"></div>
<svg style="left:106px;top:540px;" width="7" height="10" viewBox="0 0 7 10"><path d="M0 0L6 4.5L0 9Z" fill="#c4c4c4"/></svg>
<div class="t" style="left:122px;top:538.34px;font-size:12px;color:#d9d9d9;letter-spacing:-0.3px">Adjust levels</div>
<div class="ab" style="left:117px;top:574px;width:160px;height:1px;background:#28272a;"></div>
<svg style="left:48px;top:559px;" width="11" height="10" viewBox="0 0 11 10"><path d="M1 5L4 8.5L10 1" fill="none" stroke="#bdbdbd" stroke-width="1.9"/></svg>
<div class="ab" style="left:67px;top:558px;width:13px;height:12px;background:#323135;border:1px solid #242327;border-right-color:#3a393d;border-bottom-color:#3a393d"></div>
<svg style="left:106px;top:560px;" width="7" height="10" viewBox="0 0 7 10"><path d="M0 0L6 4.5L0 9Z" fill="#c4c4c4"/></svg>
<div class="t" style="left:122px;top:558.34px;font-size:12px;color:#d9d9d9;letter-spacing:-0.3px">Adjust RGB levels</div>
<div class="ab" style="left:117px;top:594px;width:160px;height:1px;background:#28272a;"></div>
<svg style="left:48px;top:579px;" width="11" height="10" viewBox="0 0 11 10"><path d="M1 5L4 8.5L10 1" fill="none" stroke="#bdbdbd" stroke-width="1.9"/></svg>
<div class="ab" style="left:67px;top:578px;width:13px;height:12px;background:#323135;border:1px solid #242327;border-right-color:#3a393d;border-bottom-color:#3a393d"></div>
<svg style="left:106px;top:580px;" width="7" height="10" viewBox="0 0 7 10"><path d="M0 0L6 4.5L0 9Z" fill="#c4c4c4"/></svg>
<div class="t" style="left:122px;top:578.34px;font-size:12px;color:#d9d9d9;letter-spacing:-0.3px">Convert</div>
<div class="ab" style="left:117px;top:614px;width:160px;height:1px;background:#28272a;"></div>
<svg style="left:48px;top:599px;" width="11" height="10" viewBox="0 0 11 10"><path d="M1 5L4 8.5L10 1" fill="none" stroke="#bdbdbd" stroke-width="1.9"/></svg>
<div class="ab" style="left:67px;top:598px;width:13px;height:12px;background:#323135;border:1px solid #242327;border-right-color:#3a393d;border-bottom-color:#3a393d"></div>
<svg style="left:106px;top:600px;" width="7" height="10" viewBox="0 0 7 10"><path d="M0 0L6 4.5L0 9Z" fill="#c4c4c4"/></svg>
<div class="t" style="left:122px;top:598.34px;font-size:12px;color:#d9d9d9;letter-spacing:-0.3px">Import images</div>
<div class="ab" style="left:117px;top:634px;width:160px;height:1px;background:#28272a;"></div>
<svg style="left:48px;top:619px;" width="11" height="10" viewBox="0 0 11 10"><path d="M1 5L4 8.5L10 1" fill="none" stroke="#bdbdbd" stroke-width="1.9"/></svg>
<div class="ab" style="left:67px;top:618px;width:13px;height:12px;background:#323135;border:1px solid #242327;border-right-color:#3a393d;border-bottom-color:#3a393d"></div>
<svg style="left:106px;top:620px;" width="7" height="10" viewBox="0 0 7 10"><path d="M0 0L6 4.5L0 9Z" fill="#c4c4c4"/></svg>
<div class="t" style="left:122px;top:618.34px;font-size:12px;color:#d9d9d9;letter-spacing:-0.3px">Insert image</div>
<div class="ab" style="left:117px;top:654px;width:160px;height:1px;background:#28272a;"></div>
<svg style="left:48px;top:639px;" width="11" height="10" viewBox="0 0 11 10"><path d="M1 5L4 8.5L10 1" fill="none" stroke="#bdbdbd" stroke-width="1.9"/></svg>
<div class="ab" style="left:67px;top:638px;width:13px;height:12px;background:#323135;border:1px solid #242327;border-right-color:#3a393d;border-bottom-color:#3a393d"></div>
<svg style="left:106px;top:640px;" width="7" height="10" viewBox="0 0 7 10"><path d="M0 0L6 4.5L0 9Z" fill="#c4c4c4"/></svg>
<div class="t" style="left:122px;top:638.34px;font-size:12px;color:#d9d9d9;letter-spacing:-0.3px">Normalize</div>
<div class="ab" style="left:117px;top:674px;width:160px;height:1px;background:#28272a;"></div>
<svg style="left:48px;top:659px;" width="11" height="10" viewBox="0 0 11 10"><path d="M1 5L4 8.5L10 1" fill="none" stroke="#bdbdbd" stroke-width="1.9"/></svg>
<div class="ab" style="left:67px;top:658px;width:13px;height:12px;background:#323135;border:1px solid #242327;border-right-color:#3a393d;border-bottom-color:#3a393d"></div>
<svg style="left:106px;top:660px;" width="7" height="10" viewBox="0 0 7 10"><path d="M0 0L6 4.5L0 9Z" fill="#c4c4c4"/></svg>
<div class="t" style="left:122px;top:658.34px;font-size:12px;color:#d9d9d9;letter-spacing:-0.3px">On event open</div>
<div class="ab" style="left:117px;top:694px;width:160px;height:1px;background:#28272a;"></div>
<svg style="left:48px;top:679px;" width="11" height="10" viewBox="0 0 11 10"><path d="M1 5L4 8.5L10 1" fill="none" stroke="#bdbdbd" stroke-width="1.9"/></svg>
<div class="ab" style="left:67px;top:678px;width:13px;height:12px;background:#323135;border:1px solid #242327;border-right-color:#3a393d;border-bottom-color:#3a393d"></div>
<svg style="left:106px;top:680px;" width="7" height="10" viewBox="0 0 7 10"><path d="M0 0L6 4.5L0 9Z" fill="#c4c4c4"/></svg>
<div class="t" style="left:122px;top:678.34px;font-size:12px;color:#d9d9d9;letter-spacing:-0.3px">Refresh CS3 presets</div>
<div class="ab" style="left:117px;top:714px;width:160px;height:1px;background:#28272a;"></div>
<svg style="left:48px;top:699px;" width="11" height="10" viewBox="0 0 11 10"><path d="M1 5L4 8.5L10 1" fill="none" stroke="#bdbdbd" stroke-width="1.9"/></svg>
<div class="ab" style="left:67px;top:698px;width:13px;height:12px;background:#323135;border:1px solid #242327;border-right-color:#3a393d;border-bottom-color:#3a393d"></div>
<svg style="left:106px;top:700px;" width="7" height="10" viewBox="0 0 7 10"><path d="M0 0L6 4.5L0 9Z" fill="#c4c4c4"/></svg>
<div class="t" style="left:122px;top:698.34px;font-size:12px;color:#d9d9d9;letter-spacing:-0.3px">Remove alpha channels</div>
<div class="ab" style="left:117px;top:734px;width:160px;height:1px;background:#28272a;"></div>
<svg style="left:48px;top:719px;" width="11" height="10" viewBox="0 0 11 10"><path d="M1 5L4 8.5L10 1" fill="none" stroke="#bdbdbd" stroke-width="1.9"/></svg>
<div class="ab" style="left:67px;top:718px;width:13px;height:12px;background:#323135;border:1px solid #242327;border-right-color:#3a393d;border-bottom-color:#3a393d"></div>
<svg style="left:106px;top:720px;" width="7" height="10" viewBox="0 0 7 10"><path d="M0 0L6 4.5L0 9Z" fill="#c4c4c4"/></svg>
<div class="t" style="left:122px;top:718.34px;font-size:12px;color:#d9d9d9;letter-spacing:-0.3px">Save sequential</div>
<div class="ab" style="left:117px;top:754px;width:160px;height:1px;background:#28272a;"></div>
<svg style="left:48px;top:739px;" width="11" height="10" viewBox="0 0 11 10"><path d="M1 5L4 8.5L10 1" fill="none" stroke="#bdbdbd" stroke-width="1.9"/></svg>
<div class="ab" style="left:67px;top:738px;width:13px;height:12px;background:#323135;border:1px solid #242327;border-right-color:#3a393d;border-bottom-color:#3a393d"></div>
<svg style="left:106px;top:740px;" width="7" height="10" viewBox="0 0 7 10"><path d="M0 0L6 4.5L0 9Z" fill="#c4c4c4"/></svg>
<div class="t" style="left:122px;top:738.34px;font-size:12px;color:#d9d9d9;letter-spacing:-0.3px">Simple UI</div>
<div class="ab" style="left:117px;top:774px;width:160px;height:1px;background:#28272a;"></div>
<svg style="left:48px;top:759px;" width="11" height="10" viewBox="0 0 11 10"><path d="M1 5L4 8.5L10 1" fill="none" stroke="#bdbdbd" stroke-width="1.9"/></svg>
<div class="ab" style="left:67px;top:758px;width:13px;height:12px;background:#323135;border:1px solid #242327;border-right-color:#3a393d;border-bottom-color:#3a393d"></div>
<svg style="left:106px;top:760px;" width="7" height="10" viewBox="0 0 7 10"><path d="M0 0L6 4.5L0 9Z" fill="#c4c4c4"/></svg>
<div class="t" style="left:122px;top:758.34px;font-size:12px;color:#d9d9d9;letter-spacing:-0.3px">Update metadata</div>
<div class="ab" style="left:117px;top:794px;width:160px;height:1px;background:#28272a;"></div>
<svg style="left:48px;top:779px;" width="11" height="10" viewBox="0 0 11 10"><path d="M1 5L4 8.5L10 1" fill="none" stroke="#bdbdbd" stroke-width="1.9"/></svg>
<div class="ab" style="left:67px;top:778px;width:13px;height:12px;background:#323135;border:1px solid #242327;border-right-color:#3a393d;border-bottom-color:#3a393d"></div>
<svg style="left:106px;top:780px;" width="7" height="10" viewBox="0 0 7 10"><path d="M0 0L6 4.5L0 9Z" fill="#c4c4c4"/></svg>
<div class="t" style="left:122px;top:778.34px;font-size:12px;color:#d9d9d9;letter-spacing:-0.3px">XBatch</div>
<div class="ab" style="left:117px;top:814px;width:160px;height:1px;background:#28272a;"></div>
<svg style="left:48px;top:799px;" width="11" height="10" viewBox="0 0 11 10"><path d="M1 5L4 8.5L10 1" fill="none" stroke="#bdbdbd" stroke-width="1.9"/></svg>
<div class="ab" style="left:67px;top:798px;width:13px;height:12px;background:#323135;border:1px solid #242327;border-right-color:#3a393d;border-bottom-color:#3a393d"></div>
<svg style="left:106px;top:800px;" width="7" height="10" viewBox="0 0 7 10"><path d="M0 0L6 4.5L0 9Z" fill="#c4c4c4"/></svg>
<div class="t" style="left:122px;top:798.34px;font-size:12px;color:#d9d9d9;letter-spacing:-0.3px">XScan</div>
<div class="ab" style="left:117px;top:834px;width:160px;height:1px;background:#28272a;"></div>
<svg style="left:48px;top:819px;" width="11" height="10" viewBox="0 0 11 10"><path d="M1 5L4 8.5L10 1" fill="none" stroke="#bdbdbd" stroke-width="1.9"/></svg>
<svg style="left:67px;top:818px;" width="13" height="12" viewBox="0 0 13 12"><rect x="0.5" y="0.5" width="11" height="11" fill="#3a393d" stroke="#aaa"/><rect x="0.5" y="0.5" width="11" height="2.5" fill="#aaa"/><rect x="3" y="6" width="6" height="1.2" fill="#bbb"/></svg>
<svg style="left:106px;top:820px;" width="7" height="10" viewBox="0 0 7 10"><path d="M0 0L6 4.5L0 9Z" fill="#c4c4c4"/></svg>
<div class="t" style="left:122px;top:818.34px;font-size:12px;color:#d9d9d9;letter-spacing:-0.3px">XWatermark</div>
<div class="ab" style="left:117px;top:854px;width:160px;height:1px;background:#28272a;"></div>
<div class="ab" style="left:67px;top:838px;width:13px;height:12px;background:#323135;border:1px solid #242327;border-right-color:#3a393d;border-bottom-color:#3a393d"></div>
<svg style="left:106px;top:840px;" width="7" height="10" viewBox="0 0 7 10"><path d="M0 0L6 4.5L0 9Z" fill="#c4c4c4"/></svg>
<div class="t" style="left:125px;top:838.34px;font-size:12px;color:#d9d9d9;letter-spacing:-0.3px">- Demo Scripts -</div>
<div class="ab" style="left:117px;top:874px;width:160px;height:1px;background:#28272a;"></div>
<svg style="left:48px;top:859px;" width="11" height="10" viewBox="0 0 11 10"><path d="M1 5L4 8.5L10 1" fill="none" stroke="#bdbdbd" stroke-width="1.9"/></svg>
<div class="ab" style="left:67px;top:858px;width:13px;height:12px;background:#323135;border:1px solid #242327;border-right-color:#3a393d;border-bottom-color:#3a393d"></div>
<svg style="left:106px;top:860px;" width="7" height="10" viewBox="0 0 7 10"><path d="M0 0L6 4.5L0 9Z" fill="#c4c4c4"/></svg>
<div class="t" style="left:122px;top:858.34px;font-size:12px;color:#d9d9d9;letter-spacing:-0.3px">Color book</div>
<div class="ab" style="left:117px;top:894px;width:160px;height:1px;background:#28272a;"></div>
<svg style="left:48px;top:879px;" width="11" height="10" viewBox="0 0 11 10"><path d="M1 5L4 8.5L10 1" fill="none" stroke="#bdbdbd" stroke-width="1.9"/></svg>
<div class="ab" style="left:67px;top:878px;width:13px;height:12px;background:#323135;border:1px solid #242327;border-right-color:#3a393d;border-bottom-color:#3a393d"></div>
<svg style="left:106px;top:880px;" width="7" height="10" viewBox="0 0 7 10"><path d="M0 0L6 4.5L0 9Z" fill="#c4c4c4"/></svg>
<div class="t" style="left:122px;top:878.34px;font-size:12px;color:#d9d9d9;letter-spacing:-0.3px">Color chooser icon</div>
<div class="ab" style="left:117px;top:914px;width:160px;height:1px;background:#28272a;"></div>
<svg style="left:48px;top:899px;" width="11" height="10" viewBox="0 0 11 10"><path d="M1 5L4 8.5L10 1" fill="none" stroke="#bdbdbd" stroke-width="1.9"/></svg>
<div class="ab" style="left:67px;top:898px;width:13px;height:12px;background:#323135;border:1px solid #242327;border-right-color:#3a393d;border-bottom-color:#3a393d"></div>
<svg style="left:106px;top:900px;" width="7" height="10" viewBox="0 0 7 10"><path d="M0 0L6 4.5L0 9Z" fill="#c4c4c4"/></svg>
<div class="t" style="left:122px;top:898.34px;font-size:12px;color:#d9d9d9;letter-spacing:-0.3px">Getter Demo</div>
<div class="ab" style="left:117px;top:934px;width:160px;height:1px;background:#28272a;"></div>
<svg style="left:48px;top:919px;" width="11" height="10" viewBox="0 0 11 10"><path d="M1 5L4 8.5L10 1" fill="none" stroke="#bdbdbd" stroke-width="1.9"/></svg>
<div class="ab" style="left:67px;top:918px;width:13px;height:12px;background:#323135;border:1px solid #242327;border-right-color:#3a393d;border-bottom-color:#3a393d"></div>
<svg style="left:106px;top:920px;" width="7" height="10" viewBox="0 0 7 10"><path d="M0 0L6 4.5L0 9Z" fill="#c4c4c4"/></svg>
<div class="t" style="left:122px;top:918.34px;font-size:12px;color:#d9d9d9;letter-spacing:-0.3px">Log window</div>
<div class="ab" style="left:117px;top:954px;width:160px;height:1px;background:#28272a;"></div>
<svg style="left:48px;top:939px;" width="11" height="10" viewBox="0 0 11 10"><path d="M1 5L4 8.5L10 1" fill="none" stroke="#bdbdbd" stroke-width="1.9"/></svg>
<div class="ab" style="left:67px;top:938px;width:13px;height:12px;background:#323135;border:1px solid #242327;border-right-color:#3a393d;border-bottom-color:#3a393d"></div>
<svg style="left:106px;top:940px;" width="7" height="10" viewBox="0 0 7 10"><path d="M0 0L6 4.5L0 9Z" fill="#c4c4c4"/></svg>
<div class="t" style="left:122px;top:938.34px;font-size:12px;color:#d9d9d9;letter-spacing:-0.3px">Sample UI</div>
<div class="ab" style="left:117px;top:974px;width:160px;height:1px;background:#28272a;"></div>
<div class="ab" style="left:67px;top:958px;width:13px;height:12px;background:#323135;border:1px solid #242327;border-right-color:#3a393d;border-bottom-color:#3a393d"></div>
<svg style="left:106px;top:960px;" width="7" height="10" viewBox="0 0 7 10"><path d="M0 0L6 4.5L0 9Z" fill="#c4c4c4"/></svg>
<div class="t" style="left:121px;top:958.34px;font-size:12px;color:#d9d9d9;letter-spacing:-0.3px">- Toolkit Scripts -</div>
<div class="ab" style="left:117px;top:994px;width:160px;height:1px;background:#28272a;"></div>
<svg style="left:48px;top:979px;" width="11" height="10" viewBox="0 0 11 10"><path d="M1 5L4 8.5L10 1" fill="none" stroke="#bdbdbd" stroke-width="1.9"/></svg>
<div class="ab" style="left:67px;top:978px;width:13px;height:12px;background:#323135;border:1px solid #242327;border-right-color:#3a393d;border-bottom-color:#3a393d"></div>
<svg style="left:106px;top:980px;" width="7" height="10" viewBox="0 0 7 10"><path d="M0 0L6 4.5L0 9Z" fill="#c4c4c4"/></svg>
<div class="t" style="left:122px;top:978.34px;font-size:12px;color:#d9d9d9;letter-spacing:-0.3px">Droplet decompiler</div>
<svg style="left:48px;top:999px;" width="11" height="10" viewBox="0 0 11 10"><path d="M1 5L4 8.5L10 1" fill="none" stroke="#bdbdbd" stroke-width="1.9"/></svg>
<div class="ab" style="left:67px;top:998px;width:13px;height:12px;background:#323135;border:1px solid #242327;border-right-color:#3a393d;border-bottom-color:#3a393d"></div>
<svg style="left:106px;top:1000px;" width="7" height="10" viewBox="0 0 7 10"><path d="M0 0L6 4.5L0 9Z" fill="#c4c4c4"/></svg>
<div class="t" style="left:122px;top:998.34px;font-size:12px;color:#d9d9d9;letter-spacing:-0.3px">Flatten JS</div>
<div class="ab" style="left:278px;top:94px;width:16px;height:915px;background:#2b2a2d;"></div>
<svg style="left:282px;top:99px;" width="8" height="5" viewBox="0 0 8 5"><path d="M0 4L4 0L8 4Z" fill="#cfcfcf"/></svg>
<div class="ab" style="left:280px;top:112px;width:12px;height:773px;background:#545357;border-radius:5px;border-left:1px solid #66656a"></div>
<svg style="left:282px;top:1002px;" width="8" height="5" viewBox="0 0 8 5"><path d="M0 0L4 4L8 0Z" fill="#cfcfcf"/></svg>
<div class="ab" style="left:41px;top:1010px;width:253px;height:19px;background:#363438;border-top:1px solid #29282b"></div>
<div class="ab" style="left:41px;top:1029px;width:253px;height:1px;background:#1d1c1f;"></div>
<svg style="left:108px;top:1016px;" width="9" height="9" viewBox="0 0 9 9"><rect x="0" y="0" width="9" height="9" fill="#8e8e8e"/></svg>
<svg style="left:137px;top:1016px;" width="9" height="9" viewBox="0 0 9 9"><circle cx="4.5" cy="4.5" r="4.5" fill="#8e8e8e"/></svg>
<svg style="left:166px;top:1016px;" width="9" height="9" viewBox="0 0 9 9"><path d="M0 0L9 4.5L0 9Z" fill="#8e8e8e"/></svg>
<svg style="left:193px;top:1015px;" width="12" height="10" viewBox="0 0 12 10"><path d="M0 0H5L6 1.5H12V10H0Z" fill="#a8a8a8"/></svg>
<svg style="left:226px;top:1016px;" width="10" height="10" viewBox="0 0 10 10"><path d="M0 0H10V10H4V6H0Z" fill="#a8a8a8"/><path d="M0 7H3V10Z" fill="#a8a8a8"/></svg>
<svg style="left:254px;top:1014px;" width="11" height="12" viewBox="0 0 11 12"><rect x="0" y="2" width="11" height="1.5" fill="#a8a8a8"/><path d="M3.5 2V0.5H7.5V2" fill="none" stroke="#a8a8a8"/><path d="M1.2 4H9.8V12H1.2Z" fill="none" stroke="#a8a8a8" stroke-width="1.1"/><path d="M3.8 5V11M5.5 5V11M7.2 5V11" stroke="#a8a8a8" stroke-width="0.8"/></svg>
<div class="ab" style="left:294px;top:63px;width:3px;height:967px;background:#1d1c1f;"></div>
<div class="ab" style="left:297px;top:63px;width:1348px;height:20px;background:#1e1d20;"></div>
<div class="ab" style="left:297px;top:63px;width:311px;height:19px;background:#353337;"></div>
<div class="t" style="left:307px;top:66.84px;font-size:12px;color:#dcdcdc;font-weight:bold;letter-spacing:-0.05px">© Steam Grid.psd @ 141% (Background, RGB/8) *</div>
<svg style="left:598px;top:70px;" width="6" height="6" viewBox="0 0 6 6"><path d="M0 0L6 6M6 0L0 6" stroke="#d8d8d8" stroke-width="1.3"/></svg>
<div class="ab" style="left:297px;top:82px;width:1348px;height:1px;background:#1a191c;"></div>
<div class="ab" style="left:315px;top:101px;width:1313px;height:803px;background:#1b191d;"></div>
<div class="ab" style="left:1628px;top:83px;width:17px;height:821px;background:linear-gradient(90deg,#1d1b1f,#2c2a2e 60%,#2a282c);"></div>
<div class="ab" style="left:297px;top:83px;width:1331px;height:18px;background:#29272b;"></div>
<div class="ab" style="left:297px;top:101px;width:18px;height:803px;background:#29272b;"></div>
<div class="ab" style="left:297px;top:100px;width:1331px;height:1px;background:#8a8a8a;"></div>
<div class="ab" style="left:314px;top:83px;width:1px;height:821px;background:#8a8a8a;"></div>
<svg style="left:297px;top:83px;" width="17" height="17" viewBox="0 0 17 17"><path d="M14.5 0V17M0 14.5H17" stroke="#777" stroke-width="1" stroke-dasharray="1 2"/></svg>
<svg style="left:315px;top:83px;" width="1313" height="17" viewBox="0 0 1313 17"><rect x="3" y="14" width="1" height="3" fill="#8a8a8a"/><rect x="10" y="0" width="1" height="17" fill="#8a8a8a"/><rect x="17" y="14" width="1" height="3" fill="#8a8a8a"/><rect x="24" y="12" width="1" height="5" fill="#8a8a8a"/><rect x="31" y="14" width="1" height="3" fill="#8a8a8a"/><rect x="38" y="12" width="1" height="5" fill="#8a8a8a"/><rect x="45" y="14" width="1" height="3" fill="#8a8a8a"/><rect x="52" y="12" width="1" height="5" fill="#8a8a8a"/><rect x="59" y="14" width="1" height="3" fill="#8a8a8a"/><rect x="66" y="12" width="1" height="5" fill="#8a8a8a"/><rect x="73" y="14" width="1" height="3" fill="#8a8a8a"/><rect x="80" y="0" width="1" height="17" fill="#8a8a8a"/><rect x="87" y="14" width="1" height="3" fill="#8a8a8a"/><rect x="94" y="12" width="1" height="5" fill="#8a8a8a"/><rect x="101" y="14" width="1" height="3" fill="#8a8a8a"/><rect x="108" y="12" width="1" height="5" fill="#8a8a8a"/><rect x="115" y="14" width="1" height="3" fill="#8a8a8a"/><rect x="123" y="12" width="1" height="5" fill="#8a8a8a"/><rect x="130" y="14" width="1" height="3" fill="#8a8a8a"/><rect x="137" y="12" width="1" height="5" fill="#8a8a8a"/><rect x="144" y="14" width="1" height="3" fill="#8a8a8a"/><rect x="151" y="0" width="1" height="17" fill="#8a8a8a"/><rect x="158" y="14" width="1" height="3" fill="#8a8a8a"/><rect x="165" y="12" width="1" height="5" fill="#8a8a8a"/><rect x="172" y="14" width="1" height="3" fill="#8a8a8a"/><rect x="179" y="12" width="1" height="5" fill="#8a8a8a"/><rect x="186" y="14" width="1" height="3" fill="#8a8a8a"/><rect x="193" y="12" width="1" height="5" fill="#8a8a8a"/><rect x="200" y="14" width="1" height="3" fill="#8a8a8a"/><rect x="207" y="12" width="1" height="5" fill="#8a8a8a"/><rect x="214" y="14" width="1" height="3" fill="#8a8a8a"/><rect x="221" y="0" width="1" height="17" fill="#8a8a8a"/><rect x="228" y="14" width="1" height="3" fill="#8a8a8a"/><rect x="235" y="12" width="1" height="5" fill="#8a8a8a"/><rect x="242" y="14" width="1" height="3" fill="#8a8a8a"/><rect x="249" y="12" width="1" height="5" fill="#8a8a8a"/><rect x="256" y="14" width="1" height="3" fill="#8a8a8a"/><rect x="263" y="12" width="1" height="5" fill="#8a8a8a"/><rect x="270" y="14" width="1" height="3" fill="#8a8a8a"/><rect x="277" y="12" width="1" height="5" fill="#8a8a8a"/><rect x="284" y="14" width="1" height="3" fill="#8a8a8a"/><rect x="291" y="0" width="1" height="17" fill="#8a8a8a"/><rect x="298" y="14" width="1" height="3" fill="#8a8a8a"/><rect x="305" y="12" width="1" height="5" fill="#8a8a8a"/><rect x="312" y="14" width="1" height="3" fill="#8a8a8a"/><rect x="319" y="12" width="1" height="5" fill="#8a8a8a"/><rect x="326" y="14" width="1" height="3" fill="#8a8a8a"/><rect x="333" y="12" width="1" height="5" fill="#8a8a8a"/><rect x="340" y="14" width="1" height="3" fill="#8a8a8a"/><rect x="347" y="12" width="1" height="5" fill="#8a8a8a"/><rect x="355" y="14" width="1" height="3" fill="#8a8a8a"/><rect x="362" y="0" width="1" height="17" fill="#8a8a8a"/><rect x="369" y="14" width="1" height="3" fill="#8a8a8a"/><rect x="376" y="12" width="1" height="5" fill="#8a8a8a"/><rect x="383" y="14" width="1" height="3" fill="#8a8a8a"/><rect x="390" y="12" width="1" height="5" fill="#8a8a8a"/><rect x="397" y="14" width="1" height="3" fill="#8a8a8a"/><rect x="404" y="12" width="1" height="5" fill="#8a8a8a"/><rect x="411" y="14" width="1" height="3" fill="#8a8a8a"/><rect x="418" y="12" width="1" height="5" fill="#8a8a8a"/><rect x="425" y="14" width="1" height="3" fill="#8a8a8a"/><rect x="432" y="0" width="1" height="17" fill="#8a8a8a"/><rect x="439" y="14" width="1" height="3" fill="#8a8a8a"/><rect x="446" y="12" width="1" height="5" fill="#8a8a8a"/><rect x="453" y="14" width="1" height="3" fill="#8a8a8a"/><rect x="460" y="12" width="1" height="5" fill="#8a8a8a"/><rect x="467" y="14" width="1" height="3" fill="#8a8a8a"/><rect x="474" y="12" width="1" height="5" fill="#8a8a8a"/><rect x="481" y="14" width="1" height="3" fill="#8a8a8a"/><rect x="488" y="12" width="1" height="5" fill="#8a8a8a"/><rect x="495" y="14" width="1" height="3" fill="#8a8a8a"/><rect x="502" y="0" width="1" height="17" fill="#8a8a8a"/><rect x="509" y="14" width="1" height="3" fill="#8a8a8a"/><rect x="516" y="12" width="1" height="5" fill="#8a8a8a"/><rect x="523" y="14" width="1" height="3" fill="#8a8a8a"/><rect x="530" y="12" width="1" height="5" fill="#8a8a8a"/><rect x="537" y="14" width="1" height="3" fill="#8a8a8a"/><rect x="544" y="12" width="1" height="5" fill="#8a8a8a"/><rect x="551" y="14" width="1" height="3" fill="#8a8a8a"/><rect x="558" y="12" width="1" height="5" fill="#8a8a8a"/><rect x="565" y="14" width="1" height="3" fill="#8a8a8a"/><rect x="573" y="0" width="1" height="17" fill="#8a8a8a"/><rect x="580" y="14" width="1" height="3" fill="#8a8a8a"/><rect x="587" y="12" width="1" height="5" fill="#8a8a8a"/><rect x="594" y="14" width="1" height="3" fill="#8a8a8a"/><rect x="601" y="12" width="1" height="5" fill="#8a8a8a"/><rect x="608" y="14" width="1" height="3" fill="#8a8a8a"/><rect x="615" y="12" width="1" height="5" fill="#8a8a8a"/><rect x="622" y="14" width="1" height="3" fill="#8a8a8a"/><rect x="629" y="12" width="1" height="5" fill="#8a8a8a"/><rect x="636" y="14" width="1" height="3" fill="#8a8a8a"/><rect x="643" y="0" width="1" height="17" fill="#8a8a8a"/><rect x="650" y="14" width="1" height="3" fill="#8a8a8a"/><rect x="657" y="12" width="1" height="5" fill="#8a8a8a"/><rect x="664" y="14" width="1" height="3" fill="#8a8a8a"/><rect x="671" y="12" width="1" height="5" fill="#8a8a8a"/><rect x="678" y="14" width="1" height="3" fill="#8a8a8a"/><rect x="685" y="12" width="1" height="5" fill="#8a8a8a"/><rect x="692" y="14" width="1" height="3" fill="#8a8a8a"/><rect x="699" y="12" width="1" height="5" fill="#8a8a8a"/><rect x="706" y="14" width="1" height="3" fill="#8a8a8a"/><rect x="713" y="0" width="1" height="17" fill="#8a8a8a"/><rect x="720" y="14" width="1" height="3" fill="#8a8a8a"/><rect x="727" y="12" width="1" height="5" fill="#8a8a8a"/><rect x="734" y="14" width="1" height="3" fill="#8a8a8a"/><rect x="741" y="12" width="1" height="5" fill="#8a8a8a"/><rect x="748" y="14" width="1" height="3" fill="#8a8a8a"/><rect x="755" y="12" width="1" height="5" fill="#8a8a8a"/><rect x="762" y="14" width="1" height="3" fill="#8a8a8a"/><rect x="769" y="12" width="1" height="5" fill="#8a8a8a"/><rect x="776" y="14" width="1" height="3" fill="#8a8a8a"/><rect x="783" y="0" width="1" height="17" fill="#8a8a8a"/><rect x="790" y="14" width="1" height="3" fill="#8a8a8a"/><rect x="797" y="12" width="1" height="5" fill="#8a8a8a"/><rect x="805" y="14" width="1" height="3" fill="#8a8a8a"/><rect x="812" y="12" width="1" height="5" fill="#8a8a8a"/><rect x="819" y="14" width="1" height="3" fill="#8a8a8a"/><rect x="826" y="12" width="1" height="5" fill="#8a8a8a"/><rect x="833" y="14" width="1" height="3" fill="#8a8a8a"/><rect x="840" y="12" width="1" height="5" fill="#8a8a8a"/><rect x="847" y="14" width="1" height="3" fill="#8a8a8a"/><rect x="854" y="0" width="1" height="17" fill="#8a8a8a"/><rect x="861" y="14" width="1" height="3" fill="#8a8a8a"/><rect x="868" y="12" width="1" height="5" fill="#8a8a8a"/><rect x="875" y="14" width="1" height="3" fill="#8a8a8a"/><rect x="882" y="12" width="1" height="5" fill="#8a8a8a"/><rect x="889" y="14" width="1" height="3" fill="#8a8a8a"/><rect x="896" y="12" width="1" height="5" fill="#8a8a8a"/><rect x="903" y="14" width="1" height="3" fill="#8a8a8a"/><rect x="910" y="12" width="1" height="5" fill="#8a8a8a"/><rect x="917" y="14" width="1" height="3" fill="#8a8a8a"/><rect x="924" y="0" width="1" height="17" fill="#8a8a8a"/><rect x="931" y="14" width="1" height="3" fill="#8a8a8a"/><rect x="938" y="12" width="1" height="5" fill="#8a8a8a"/><rect x="945" y="14" width="1" height="3" fill="#8a8a8a"/><rect x="952" y="12" width="1" height="5" fill="#8a8a8a"/><rect x="959" y="14" width="1" height="3" fill="#8a8a8a"/><rect x="966" y="12" width="1" height="5" fill="#8a8a8a"/><rect x="973" y="14" width="1" height="3" fill="#8a8a8a"/><rect x="980" y="12" width="1" height="5" fill="#8a8a8a"/><rect x="987" y="14" width="1" height="3" fill="#8a8a8a"/><rect x="994" y="0" width="1" height="17" fill="#8a8a8a"/><rect x="1001" y="14" width="1" height="3" fill="#8a8a8a"/><rect x="1008" y="12" width="1" height="5" fill="#8a8a8a"/><rect x="1015" y="14" width="1" height="3" fill="#8a8a8a"/><rect x="1023" y="12" width="1" height="5" fill="#8a8a8a"/><rect x="1030" y="14" width="1" height="3" fill="#8a8a8a"/><rect x="1037" y="12" width="1" height="5" fill="#8a8a8a"/><rect x="1044" y="14" width="1" height="3" fill="#8a8a8a"/><rect x="1051" y="12" width="1" height="5" fill="#8a8a8a"/><rect x="1058" y="14" width="1" height="3" fill="#8a8a8a"/><rect x="1065" y="0" width="1" height="17" fill="#8a8a8a"/><rect x="1072" y="14" width="1" height="3" fill="#8a8a8a"/><rect x="1079" y="12" width="1" height="5" fill="#8a8a8a"/><rect x="1086" y="14" width="1" height="3" fill="#8a8a8a"/><rect x="1093" y="12" width="1" height="5" fill="#8a8a8a"/><rect x="1100" y="14" width="1" height="3" fill="#8a8a8a"/><rect x="1107" y="12" width="1" height="5" fill="#8a8a8a"/><rect x="1114" y="14" width="1" height="3" fill="#8a8a8a"/><rect x="1121" y="12" width="1" height="5" fill="#8a8a8a"/><rect x="1128" y="14" width="1" height="3" fill="#8a8a8a"/><rect x="1135" y="0" width="1" height="17" fill="#8a8a8a"/><rect x="1142" y="14" width="1" height="3" fill="#8a8a8a"/><rect x="1149" y="12" width="1" height="5" fill="#8a8a8a"/><rect x="1156" y="14" width="1" height="3" fill="#8a8a8a"/><rect x="1163" y="12" width="1" height="5" fill="#8a8a8a"/><rect x="1170" y="14" width="1" height="3" fill="#8a8a8a"/><rect x="1177" y="12" width="1" height="5" fill="#8a8a8a"/><rect x="1184" y="14" width="1" height="3" fill="#8a8a8a"/><rect x="1191" y="12" width="1" height="5" fill="#8a8a8a"/><rect x="1198" y="14" width="1" height="3" fill="#8a8a8a"/><rect x="1205" y="0" width="1" height="17" fill="#8a8a8a"/><rect x="1212" y="14" width="1" height="3" fill="#8a8a8a"/><rect x="1219" y="12" width="1" height="5" fill="#8a8a8a"/><rect x="1226" y="14" width="1" height="3" fill="#8a8a8a"/><rect x="1233" y="12" width="1" height="5" fill="#8a8a8a"/><rect x="1240" y="14" width="1" height="3" fill="#8a8a8a"/><rect x="1247" y="12" width="1" height="5" fill="#8a8a8a"/><rect x="1255" y="14" width="1" height="3" fill="#8a8a8a"/><rect x="1262" y="12" width="1" height="5" fill="#8a8a8a"/><rect x="1269" y="14" width="1" height="3" fill="#8a8a8a"/><rect x="1276" y="0" width="1" height="17" fill="#8a8a8a"/><rect x="1283" y="14" width="1" height="3" fill="#8a8a8a"/><rect x="1290" y="12" width="1" height="5" fill="#8a8a8a"/><rect x="1297" y="14" width="1" height="3" fill="#8a8a8a"/><rect x="1304" y="12" width="1" height="5" fill="#8a8a8a"/><rect x="1311" y="14" width="1" height="3" fill="#8a8a8a"/></svg>
<div class="t" style="left:330px;top:84.77px;font-size:11.5px;color:#c9c9c9;">0</div>
<div class="t" style="left:400px;top:84.77px;font-size:11.5px;color:#c9c9c9;">50</div>
<div class="t" style="left:470px;top:84.77px;font-size:11.5px;color:#c9c9c9;">100</div>
<div class="t" style="left:540px;top:84.77px;font-size:11.5px;color:#c9c9c9;">150</div>
<div class="t" style="left:611px;top:84.77px;font-size:11.5px;color:#c9c9c9;">200</div>
<div class="t" style="left:681px;top:84.77px;font-size:11.5px;color:#c9c9c9;">250</div>
<div class="t" style="left:751px;top:84.77px;font-size:11.5px;color:#c9c9c9;">300</div>
<div class="t" style="left:822px;top:84.77px;font-size:11.5px;color:#c9c9c9;">350</div>
<div class="t" style="left:892px;top:84.77px;font-size:11.5px;color:#c9c9c9;">400</div>
<div class="t" style="left:962px;top:84.77px;font-size:11.5px;color:#c9c9c9;">450</div>
<div class="t" style="left:1033px;top:84.77px;font-size:11.5px;color:#c9c9c9;">500</div>
<div class="t" style="left:1103px;top:84.77px;font-size:11.5px;color:#c9c9c9;">550</div>
<div class="t" style="left:1173px;top:84.77px;font-size:11.5px;color:#c9c9c9;">600</div>
<div class="t" style="left:1244px;top:84.77px;font-size:11.5px;color:#c9c9c9;">650</div>
<div class="t" style="left:1314px;top:84.77px;font-size:11.5px;color:#c9c9c9;">700</div>
<div class="t" style="left:1384px;top:84.77px;font-size:11.5px;color:#c9c9c9;">750</div>
<div class="t" style="left:1454px;top:84.77px;font-size:11.5px;color:#c9c9c9;">800</div>
<div class="t" style="left:1525px;top:84.77px;font-size:11.5px;color:#c9c9c9;">850</div>
<div class="t" style="left:1595px;top:84.77px;font-size:11.5px;color:#c9c9c9;">900</div>
<svg style="left:297px;top:101px;" width="17" height="803" viewBox="0 0 17 803"><rect x="12" y="1" width="5" height="1" fill="#8a8a8a"/><rect x="13" y="8" width="4" height="1" fill="#8a8a8a"/><rect x="12" y="15" width="5" height="1" fill="#8a8a8a"/><rect x="13" y="22" width="4" height="1" fill="#8a8a8a"/><rect x="0" y="29" width="17" height="1" fill="#8a8a8a"/><rect x="13" y="36" width="4" height="1" fill="#8a8a8a"/><rect x="12" y="43" width="5" height="1" fill="#8a8a8a"/><rect x="13" y="50" width="4" height="1" fill="#8a8a8a"/><rect x="12" y="57" width="5" height="1" fill="#8a8a8a"/><rect x="13" y="64" width="4" height="1" fill="#8a8a8a"/><rect x="12" y="71" width="5" height="1" fill="#8a8a8a"/><rect x="13" y="78" width="4" height="1" fill="#8a8a8a"/><rect x="12" y="85" width="5" height="1" fill="#8a8a8a"/><rect x="13" y="92" width="4" height="1" fill="#8a8a8a"/><rect x="0" y="99" width="17" height="1" fill="#8a8a8a"/><rect x="13" y="106" width="4" height="1" fill="#8a8a8a"/><rect x="12" y="113" width="5" height="1" fill="#8a8a8a"/><rect x="13" y="120" width="4" height="1" fill="#8a8a8a"/><rect x="12" y="127" width="5" height="1" fill="#8a8a8a"/><rect x="13" y="134" width="4" height="1" fill="#8a8a8a"/><rect x="12" y="141" width="5" height="1" fill="#8a8a8a"/><rect x="13" y="148" width="4" height="1" fill="#8a8a8a"/><rect x="12" y="155" width="5" height="1" fill="#8a8a8a"/><rect x="13" y="162" width="4" height="1" fill="#8a8a8a"/><rect x="0" y="169" width="17" height="1" fill="#8a8a8a"/><rect x="13" y="176" width="4" height="1" fill="#8a8a8a"/><rect x="12" y="183" width="5" height="1" fill="#8a8a8a"/><rect x="13" y="190" width="4" height="1" fill="#8a8a8a"/><rect x="12" y="197" width="5" height="1" fill="#8a8a8a"/><rect x="13" y="204" width="4" height="1" fill="#8a8a8a"/><rect x="12" y="211" width="5" height="1" fill="#8a8a8a"/><rect x="13" y="219" width="4" height="1" fill="#8a8a8a"/><rect x="12" y="226" width="5" height="1" fill="#8a8a8a"/><rect x="13" y="233" width="4" height="1" fill="#8a8a8a"/><rect x="0" y="240" width="17" height="1" fill="#8a8a8a"/><rect x="13" y="247" width="4" height="1" fill="#8a8a8a"/><rect x="12" y="254" width="5" height="1" fill="#8a8a8a"/><rect x="13" y="261" width="4" height="1" fill="#8a8a8a"/><rect x="12" y="268" width="5" height="1" fill="#8a8a8a"/><rect x="13" y="275" width="4" height="1" fill="#8a8a8a"/><rect x="12" y="282" width="5" height="1" fill="#8a8a8a"/><rect x="13" y="289" width="4" height="1" fill="#8a8a8a"/><rect x="12" y="296" width="5" height="1" fill="#8a8a8a"/><rect x="13" y="303" width="4" height="1" fill="#8a8a8a"/><rect x="0" y="310" width="17" height="1" fill="#8a8a8a"/><rect x="13" y="317" width="4" height="1" fill="#8a8a8a"/><rect x="12" y="324" width="5" height="1" fill="#8a8a8a"/><rect x="13" y="331" width="4" height="1" fill="#8a8a8a"/><rect x="12" y="338" width="5" height="1" fill="#8a8a8a"/><rect x="13" y="345" width="4" height="1" fill="#8a8a8a"/><rect x="12" y="352" width="5" height="1" fill="#8a8a8a"/><rect x="13" y="359" width="4" height="1" fill="#8a8a8a"/><rect x="12" y="366" width="5" height="1" fill="#8a8a8a"/><rect x="13" y="373" width="4" height="1" fill="#8a8a8a"/><rect x="0" y="380" width="17" height="1" fill="#8a8a8a"/><rect x="13" y="387" width="4" height="1" fill="#8a8a8a"/><rect x="12" y="394" width="5" height="1" fill="#8a8a8a"/><rect x="13" y="401" width="4" height="1" fill="#8a8a8a"/><rect x="12" y="408" width="5" height="1" fill="#8a8a8a"/><rect x="13" y="415" width="4" height="1" fill="#8a8a8a"/><rect x="12" y="422" width="5" height="1" fill="#8a8a8a"/><rect x="13" y="429" width="4" height="1" fill="#8a8a8a"/><rect x="12" y="437" width="5" height="1" fill="#8a8a8a"/><rect x="13" y="444" width="4" height="1" fill="#8a8a8a"/><rect x="0" y="451" width="17" height="1" fill="#8a8a8a"/><rect x="13" y="458" width="4" height="1" fill="#8a8a8a"/><rect x="12" y="465" width="5" height="1" fill="#8a8a8a"/><rect x="13" y="472" width="4" height="1" fill="#8a8a8a"/><rect x="12" y="479" width="5" height="1" fill="#8a8a8a"/><rect x="13" y="486" width="4" height="1" fill="#8a8a8a"/><rect x="12" y="493" width="5" height="1" fill="#8a8a8a"/><rect x="13" y="500" width="4" height="1" fill="#8a8a8a"/><rect x="12" y="507" width="5" height="1" fill="#8a8a8a"/><rect x="13" y="514" width="4" height="1" fill="#8a8a8a"/><rect x="0" y="521" width="17" height="1" fill="#8a8a8a"/><rect x="13" y="528" width="4" height="1" fill="#8a8a8a"/><rect x="12" y="535" width="5" height="1" fill="#8a8a8a"/><rect x="13" y="542" width="4" height="1" fill="#8a8a8a"/><rect x="12" y="549" width="5" height="1" fill="#8a8a8a"/><rect x="13" y="556" width="4" height="1" fill="#8a8a8a"/><rect x="12" y="563" width="5" height="1" fill="#8a8a8a"/><rect x="13" y="570" width="4" height="1" fill="#8a8a8a"/><rect x="12" y="577" width="5" height="1" fill="#8a8a8a"/><rect x="13" y="584" width="4" height="1" fill="#8a8a8a"/><rect x="0" y="591" width="17" height="1" fill="#8a8a8a"/><rect x="13" y="598" width="4" height="1" fill="#8a8a8a"/><rect x="12" y="605" width="5" height="1" fill="#8a8a8a"/><rect x="13" y="612" width="4" height="1" fill="#8a8a8a"/><rect x="12" y="619" width="5" height="1" fill="#8a8a8a"/><rect x="13" y="626" width="4" height="1" fill="#8a8a8a"/><rect x="12" y="633" width="5" height="1" fill="#8a8a8a"/><rect x="13" y="640" width="4" height="1" fill="#8a8a8a"/><rect x="12" y="647" width="5" height="1" fill="#8a8a8a"/><rect x="13" y="654" width="4" height="1" fill="#8a8a8a"/><rect x="0" y="661" width="17" height="1" fill="#8a8a8a"/><rect x="13" y="669" width="4" height="1" fill="#8a8a8a"/><rect x="12" y="676" width="5" height="1" fill="#8a8a8a"/><rect x="13" y="683" width="4" height="1" fill="#8a8a8a"/><rect x="12" y="690" width="5" height="1" fill="#8a8a8a"/><rect x="13" y="697" width="4" height="1" fill="#8a8a8a"/><rect x="12" y="704" width="5" height="1" fill="#8a8a8a"/><rect x="13" y="711" width="4" height="1" fill="#8a8a8a"/><rect x="12" y="718" width="5" height="1" fill="#8a8a8a"/><rect x="13" y="725" width="4" height="1" fill="#8a8a8a"/><rect x="0" y="732" width="17" height="1" fill="#8a8a8a"/><rect x="13" y="739" width="4" height="1" fill="#8a8a8a"/><rect x="12" y="746" width="5" height="1" fill="#8a8a8a"/><rect x="13" y="753" width="4" height="1" fill="#8a8a8a"/><rect x="12" y="760" width="5" height="1" fill="#8a8a8a"/><rect x="13" y="767" width="4" height="1" fill="#8a8a8a"/><rect x="12" y="774" width="5" height="1" fill="#8a8a8a"/><rect x="13" y="781" width="4" height="1" fill="#8a8a8a"/><rect x="12" y="788" width="5" height="1" fill="#8a8a8a"/><rect x="13" y="795" width="4" height="1" fill="#8a8a8a"/><rect x="0" y="802" width="17" height="1" fill="#8a8a8a"/></svg>
<div class="t" style="left:300px;top:134.27px;font-size:11.5px;color:#c9c9c9;">5</div>
<div class="t" style="left:300px;top:145.27px;font-size:11.5px;color:#c9c9c9;">0</div>
<div class="t" style="left:300px;top:204.27px;font-size:11.5px;color:#c9c9c9;">0</div>
<div class="t" style="left:300px;top:274.27px;font-size:11.5px;color:#c9c9c9;">5</div>
<div class="t" style="left:300px;top:285.27px;font-size:11.5px;color:#c9c9c9;">0</div>
<div class="t" style="left:300px;top:345.27px;font-size:11.5px;color:#c9c9c9;">1</div>
<div class="t" style="left:300px;top:356.27px;font-size:11.5px;color:#c9c9c9;">0</div>
<div class="t" style="left:300px;top:367.27px;font-size:11.5px;color:#c9c9c9;">0</div>
<div class="t" style="left:300px;top:415.27px;font-size:11.5px;color:#c9c9c9;">1</div>
<div class="t" style="left:300px;top:426.27px;font-size:11.5px;color:#c9c9c9;">5</div>
<div class="t" style="left:300px;top:437.27px;font-size:11.5px;color:#c9c9c9;">0</div>
<div class="t" style="left:300px;top:485.27px;font-size:11.5px;color:#c9c9c9;">2</div>
<div class="t" style="left:300px;top:496.27px;font-size:11.5px;color:#c9c9c9;">0</div>
<div class="t" style="left:300px;top:507.27px;font-size:11.5px;color:#c9c9c9;">0</div>
<div class="t" style="left:300px;top:556.27px;font-size:11.5px;color:#c9c9c9;">2</div>
<div class="t" style="left:300px;top:567.27px;font-size:11.5px;color:#c9c9c9;">5</div>
<div class="t" style="left:300px;top:578.27px;font-size:11.5px;color:#c9c9c9;">0</div>
<div class="t" style="left:300px;top:626.27px;font-size:11.5px;color:#c9c9c9;">3</div>
<div class="t" style="left:300px;top:637.27px;font-size:11.5px;color:#c9c9c9;">0</div>
<div class="t" style="left:300px;top:648.27px;font-size:11.5px;color:#c9c9c9;">0</div>
<div class="t" style="left:300px;top:696.27px;font-size:11.5px;color:#c9c9c9;">3</div>
<div class="t" style="left:300px;top:707.27px;font-size:11.5px;color:#c9c9c9;">5</div>
<div class="t" style="left:300px;top:718.27px;font-size:11.5px;color:#c9c9c9;">0</div>
<div class="t" style="left:300px;top:766.27px;font-size:11.5px;color:#c9c9c9;">4</div>
<div class="t" style="left:300px;top:777.27px;font-size:11.5px;color:#c9c9c9;">0</div>
<div class="t" style="left:300px;top:788.27px;font-size:11.5px;color:#c9c9c9;">0</div>
<div class="t" style="left:300px;top:837.27px;font-size:11.5px;color:#c9c9c9;">4</div>
<div class="t" style="left:300px;top:848.27px;font-size:11.5px;color:#c9c9c9;">5</div>
<div class="t" style="left:300px;top:859.27px;font-size:11.5px;color:#c9c9c9;">0</div>
<div class="ab" style="left:325px;top:200px;width:1294px;height:605px;background:#ff24ff;"></div>
<div class="ab" style="left:325px;top:200px;width:1294px;height:1px;background:#ff9cff;"></div>
<div class="ab" style="left:648px;top:101px;width:1px;height:99px;background:#66d2f2;"></div>
<div class="ab" style="left:648px;top:200px;width:1px;height:605px;background:#a8c8fa;"></div>
<div class="ab" style="left:648px;top:805px;width:1px;height:99px;background:#66d2f2;"></div>
<div class="ab" style="left:971px;top:101px;width:1px;height:99px;background:#66d2f2;"></div>
<div class="ab" style="left:971px;top:200px;width:1px;height:605px;background:#a8c8fa;"></div>
<div class="ab" style="left:971px;top:805px;width:1px;height:99px;background:#66d2f2;"></div>
<div class="ab" style="left:1295px;top:101px;width:1px;height:99px;background:#66d2f2;"></div>
<div class="ab" style="left:1295px;top:200px;width:1px;height:605px;background:#a8c8fa;"></div>
<div class="ab" style="left:1295px;top:805px;width:1px;height:99px;background:#66d2f2;"></div>
<div class="ab" style="left:315px;top:350px;width:10px;height:1px;background:#66d2f2;"></div>
<div class="ab" style="left:325px;top:350px;width:1294px;height:1px;background:#a8c8fa;"></div>
<div class="ab" style="left:1619px;top:350px;width:9px;height:1px;background:#66d2f2;"></div>
<div class="ab" style="left:315px;top:502px;width:10px;height:1px;background:#66d2f2;"></div>
<div class="ab" style="left:325px;top:502px;width:1294px;height:1px;background:#a8c8fa;"></div>
<div class="ab" style="left:1619px;top:502px;width:9px;height:1px;background:#66d2f2;"></div>
<div class="ab" style="left:315px;top:653px;width:10px;height:1px;background:#66d2f2;"></div>
<div class="ab" style="left:325px;top:653px;width:1294px;height:1px;background:#a8c8fa;"></div>
<div class="ab" style="left:1619px;top:653px;width:9px;height:1px;background:#66d2f2;"></div>
<div class="ab" style="left:297px;top:904px;width:1348px;height:18px;background:#2c2a2e;"></div>
<div class="ab" style="left:297px;top:904px;width:48px;height:18px;background:#333135;"></div>
<div class="t" style="left:301px;top:907.69px;font-size:11px;color:#e0e0e0;letter-spacing:-0.2px">140.65%</div>
<svg style="left:351px;top:907px;" width="13" height="13" viewBox="0 0 13 13"><circle cx="6.5" cy="6.5" r="6" fill="#cfcfcf"/><path d="M4 3H8L10 5V10H4Z" fill="#666"/><path d="M6 5H8V7" stroke="#cfcfcf" fill="none"/></svg>
<div class="ab" style="left:368px;top:904px;width:171px;height:18px;background:#333135;"></div>
<div class="t" style="left:398px;top:907.27px;font-size:11.5px;color:#d6d6d6;letter-spacing:-0.2px">© Doc: 1.13M/0 bytes</div>
<div class="ab" style="left:540px;top:905px;width:12px;height:16px;background:#3a383c;"></div>
<svg style="left:542px;top:909px;" width="7" height="9" viewBox="0 0 7 9"><path d="M0 0L6 4.5L0 9Z" fill="#d0d0d0"/></svg>
<div class="ab" style="left:553px;top:904px;width:1075px;height:18px;background:#222124;"></div>
<div class="ab" style="left:1628px;top:904px;width:17px;height:18px;background:#39373b;"></div>
<div class="ab" style="left:297px;top:922px;width:1348px;height:2px;background:#1d1c1f;"></div>
<div class="ab" style="left:297px;top:924px;width:1348px;height:17px;background:#1e1d20;"></div>
<div class="t" style="left:304.5px;top:927.19px;font-size:11px;color:#8d8d8d;font-weight:bold;letter-spacing:-0.2px">Mini Bridge</div>
<div class="ab" style="left:374px;top:924px;width:59px;height:17px;background:#363438;"></div>
<div class="t" style="left:381.5px;top:927.19px;font-size:11px;color:#dedede;font-weight:bold;letter-spacing:-0.3px">Timeline</div>
<svg style="left:1626px;top:929px;" width="14" height="8" viewBox="0 0 14 8"><path d="M0 2H5L2.5 5Z" fill="#cfcfcf"/><rect x="6" y="0" width="8" height="1" fill="#cfcfcf"/><rect x="6" y="2" width="8" height="1" fill="#cfcfcf"/><rect x="6" y="4" width="8" height="1" fill="#cfcfcf"/><rect x="6" y="6" width="8" height="1" fill="#cfcfcf"/></svg>
<div class="ab" style="left:297px;top:941px;width:1348px;height:1px;background:#29282b;"></div>
<div class="ab" style="left:297px;top:942px;width:1348px;height:66px;background:#303033;"></div>
<div class="ab" style="left:297px;top:943px;width:51px;height:65px;background:#4b5266;"></div>
<div class="ab" style="left:300px;top:946px;width:46px;height:46px;background:#2e2d31;border:1.5px solid #d8d8e0"></div>
<div class="ab" style="left:302px;top:960px;width:41px;height:18px;background:#ff24ff;"></div>
<div class="ab" style="left:302px;top:948px;width:15px;height:13px;background:#252428;"></div>
<div class="t" style="left:305px;top:949.19px;font-size:11px;color:#f0f0f0;font-weight:bold">1</div>
<div class="t" style="left:305.5px;top:994.69px;font-size:11px;color:#e8e8e8;letter-spacing:-0.2px">0 sec.</div>
<svg style="left:336px;top:998px;" width="8" height="6" viewBox="0 0 8 6"><path d="M0 0H7L3.5 5Z" fill="#e8e8e8"/></svg>
<div class="ab" style="left:297px;top:1008px;width:1348px;height:22px;background:#252427;border-top:1px solid #1f1e21"></div>
<div class="ab" style="left:297px;top:1009px;width:30px;height:20px;background:#333236;"></div>
<div class="ab" style="left:327px;top:1009px;width:74px;height:20px;background:#333236;"></div>
<div class="t" style="left:339px;top:1013.27px;font-size:11.5px;color:#6e6e6e;letter-spacing:-0.2px">Forever</div>
<svg style="left:390px;top:1015px;" width="8" height="6" viewBox="0 0 8 6"><path d="M0 0H7L3.5 5Z" fill="#8a8a8a"/></svg>
<div class="ab" style="left:402px;top:1009px;width:116px;height:20px;background:#333236;"></div>
<div class="ab" style="left:519px;top:1009px;width:87px;height:20px;background:#333236;"></div>
<svg style="left:407px;top:1014px;" width="16" height="10" viewBox="0 0 16 10"><path d="M8 0L0 5L8 10ZM16 0L8 5L16 10Z" fill="#777"/></svg>
<svg style="left:438px;top:1014px;" width="10" height="10" viewBox="0 0 10 10"><path d="M9 0L0 5L9 10Z" fill="#777"/></svg>
<svg style="left:470px;top:1014px;" width="10" height="10" viewBox="0 0 10 10"><path d="M0 0L9 5L0 10Z" fill="#777"/></svg>
<svg style="left:496px;top:1014px;" width="16" height="10" viewBox="0 0 16 10"><path d="M0 0L8 5L0 10ZM8 0L16 5L8 10Z" fill="#777"/></svg>
<svg style="left:527px;top:1013px;" width="14" height="11" viewBox="0 0 14 11"><path d="M1 1L9 7" stroke="#777" stroke-width="1.3" stroke-dasharray="1.5 1"/><circle cx="11" cy="8" r="2.5" fill="#777"/></svg>
<svg style="left:556px;top:1013px;" width="11" height="11" viewBox="0 0 11 11"><path d="M0 0H11V11H4V7H0Z" fill="#777"/><path d="M0 8H3V11Z" fill="#777"/></svg>
<svg style="left:585px;top:1012px;" width="12" height="13" viewBox="0 0 12 13"><rect x="0" y="2" width="12" height="1.5" fill="#777"/><rect x="4" y="0" width="4" height="2" fill="#777"/><path d="M1.5 4H10.5L10 13H2Z" fill="#777"/><path d="M4 5V12M6 5V12M8 5V12" stroke="#333" stroke-width="0.8"/></svg>
<div class="ab" style="left:1630px;top:1009px;width:15px;height:20px;background:#3a383c;"></div>
<div class="ab" style="left:1645px;top:63px;width:3px;height:967px;background:#1d1c1f;"></div>
<div class="ab" style="left:1648px;top:75px;width:37px;height:955px;background:#353337;"></div>
<div class="ab" style="left:1685px;top:63px;width:3px;height:967px;background:#1d1c1f;"></div>
<div class="ab" style="left:1648px;top:75px;width:37px;height:41px;background:#363438;border-bottom:1px solid #222124"></div>
<div class="ab" style="left:1657px;top:79px;width:1px;height:4px;background:#0e0e0e;"></div>
<div class="ab" style="left:1659px;top:79px;width:1px;height:4px;background:#0e0e0e;"></div>
<div class="ab" style="left:1661px;top:79px;width:1px;height:4px;background:#0e0e0e;"></div>
<div class="ab" style="left:1663px;top:79px;width:1px;height:4px;background:#0e0e0e;"></div>
<div class="ab" style="left:1665px;top:79px;width:1px;height:4px;background:#0e0e0e;"></div>
<div class="ab" style="left:1667px;top:79px;width:1px;height:4px;background:#0e0e0e;"></div>
<div class="ab" style="left:1669px;top:79px;width:1px;height:4px;background:#0e0e0e;"></div>
<div class="ab" style="left:1671px;top:79px;width:1px;height:4px;background:#0e0e0e;"></div>
<div class="ab" style="left:1673px;top:79px;width:1px;height:4px;background:#0e0e0e;"></div>
<div class="ab" style="left:1675px;top:79px;width:1px;height:4px;background:#0e0e0e;"></div>
<div class="ab" style="left:1648px;top:116px;width:37px;height:41px;background:#363438;border-bottom:1px solid #222124"></div>
<div class="ab" style="left:1657px;top:120px;width:1px;height:4px;background:#0e0e0e;"></div>
<div class="ab" style="left:1659px;top:120px;width:1px;height:4px;background:#0e0e0e;"></div>
<div class="ab" style="left:1661px;top:120px;width:1px;height:4px;background:#0e0e0e;"></div>
<div class="ab" style="left:1663px;top:120px;width:1px;height:4px;background:#0e0e0e;"></div>
<div class="ab" style="left:1665px;top:120px;width:1px;height:4px;background:#0e0e0e;"></div>
<div class="ab" style="left:1667px;top:120px;width:1px;height:4px;background:#0e0e0e;"></div>
<div class="ab" style="left:1669px;top:120px;width:1px;height:4px;background:#0e0e0e;"></div>
<div class="ab" style="left:1671px;top:120px;width:1px;height:4px;background:#0e0e0e;"></div>
<div class="ab" style="left:1673px;top:120px;width:1px;height:4px;background:#0e0e0e;"></div>
<div class="ab" style="left:1675px;top:120px;width:1px;height:4px;background:#0e0e0e;"></div>
<div class="ab" style="left:1648px;top:157px;width:37px;height:41px;background:#363438;border-bottom:1px solid #222124"></div>
<div class="ab" style="left:1657px;top:161px;width:1px;height:4px;background:#0e0e0e;"></div>
<div class="ab" style="left:1659px;top:161px;width:1px;height:4px;background:#0e0e0e;"></div>
<div class="ab" style="left:1661px;top:161px;width:1px;height:4px;background:#0e0e0e;"></div>
<div class="ab" style="left:1663px;top:161px;width:1px;height:4px;background:#0e0e0e;"></div>
<div class="ab" style="left:1665px;top:161px;width:1px;height:4px;background:#0e0e0e;"></div>
<div class="ab" style="left:1667px;top:161px;width:1px;height:4px;background:#0e0e0e;"></div>
<div class="ab" style="left:1669px;top:161px;width:1px;height:4px;background:#0e0e0e;"></div>
<div class="ab" style="left:1671px;top:161px;width:1px;height:4px;background:#0e0e0e;"></div>
<div class="ab" style="left:1673px;top:161px;width:1px;height:4px;background:#0e0e0e;"></div>
<div class="ab" style="left:1675px;top:161px;width:1px;height:4px;background:#0e0e0e;"></div>
<div class="ab" style="left:1648px;top:198px;width:37px;height:41px;background:#363438;border-bottom:1px solid #222124"></div>
<div class="ab" style="left:1657px;top:202px;width:1px;height:4px;background:#0e0e0e;"></div>
<div class="ab" style="left:1659px;top:202px;width:1px;height:4px;background:#0e0e0e;"></div>
<div class="ab" style="left:1661px;top:202px;width:1px;height:4px;background:#0e0e0e;"></div>
<div class="ab" style="left:1663px;top:202px;width:1px;height:4px;background:#0e0e0e;"></div>
<div class="ab" style="left:1665px;top:202px;width:1px;height:4px;background:#0e0e0e;"></div>
<div class="ab" style="left:1667px;top:202px;width:1px;height:4px;background:#0e0e0e;"></div>
<div class="ab" style="left:1669px;top:202px;width:1px;height:4px;background:#0e0e0e;"></div>
<div class="ab" style="left:1671px;top:202px;width:1px;height:4px;background:#0e0e0e;"></div>
<div class="ab" style="left:1673px;top:202px;width:1px;height:4px;background:#0e0e0e;"></div>
<div class="ab" style="left:1675px;top:202px;width:1px;height:4px;background:#0e0e0e;"></div>
<div class="ab" style="left:1648px;top:239px;width:37px;height:41px;background:#363438;border-bottom:1px solid #222124"></div>
<div class="ab" style="left:1657px;top:243px;width:1px;height:4px;background:#0e0e0e;"></div>
<div class="ab" style="left:1659px;top:243px;width:1px;height:4px;background:#0e0e0e;"></div>
<div class="ab" style="left:1661px;top:243px;width:1px;height:4px;background:#0e0e0e;"></div>
<div class="ab" style="left:1663px;top:243px;width:1px;height:4px;background:#0e0e0e;"></div>
<div class="ab" style="left:1665px;top:243px;width:1px;height:4px;background:#0e0e0e;"></div>
<div class="ab" style="left:1667px;top:243px;width:1px;height:4px;background:#0e0e0e;"></div>
<div class="ab" style="left:1669px;top:243px;width:1px;height:4px;background:#0e0e0e;"></div>
<div class="ab" style="left:1671px;top:243px;width:1px;height:4px;background:#0e0e0e;"></div>
<div class="ab" style="left:1673px;top:243px;width:1px;height:4px;background:#0e0e0e;"></div>
<div class="ab" style="left:1675px;top:243px;width:1px;height:4px;background:#0e0e0e;"></div>
<div class="ab" style="left:1648px;top:280px;width:37px;height:41px;background:#363438;border-bottom:1px solid #222124"></div>
<div class="ab" style="left:1657px;top:284px;width:1px;height:4px;background:#0e0e0e;"></div>
<div class="ab" style="left:1659px;top:284px;width:1px;height:4px;background:#0e0e0e;"></div>
<div class="ab" style="left:1661px;top:284px;width:1px;height:4px;background:#0e0e0e;"></div>
<div class="ab" style="left:1663px;top:284px;width:1px;height:4px;background:#0e0e0e;"></div>
<div class="ab" style="left:1665px;top:284px;width:1px;height:4px;background:#0e0e0e;"></div>
<div class="ab" style="left:1667px;top:284px;width:1px;height:4px;background:#0e0e0e;"></div>
<div class="ab" style="left:1669px;top:284px;width:1px;height:4px;background:#0e0e0e;"></div>
<div class="ab" style="left:1671px;top:284px;width:1px;height:4px;background:#0e0e0e;"></div>
<div class="ab" style="left:1673px;top:284px;width:1px;height:4px;background:#0e0e0e;"></div>
<div class="ab" style="left:1675px;top:284px;width:1px;height:4px;background:#0e0e0e;"></div>
<div class="ab" style="left:1648px;top:321px;width:37px;height:41px;background:#363438;border-bottom:1px solid #222124"></div>
<div class="ab" style="left:1657px;top:325px;width:1px;height:4px;background:#0e0e0e;"></div>
<div class="ab" style="left:1659px;top:325px;width:1px;height:4px;background:#0e0e0e;"></div>
<div class="ab" style="left:1661px;top:325px;width:1px;height:4px;background:#0e0e0e;"></div>
<div class="ab" style="left:1663px;top:325px;width:1px;height:4px;background:#0e0e0e;"></div>
<div class="ab" style="left:1665px;top:325px;width:1px;height:4px;background:#0e0e0e;"></div>
<div class="ab" style="left:1667px;top:325px;width:1px;height:4px;background:#0e0e0e;"></div>
<div class="ab" style="left:1669px;top:325px;width:1px;height:4px;background:#0e0e0e;"></div>
<div class="ab" style="left:1671px;top:325px;width:1px;height:4px;background:#0e0e0e;"></div>
<div class="ab" style="left:1673px;top:325px;width:1px;height:4px;background:#0e0e0e;"></div>
<div class="ab" style="left:1675px;top:325px;width:1px;height:4px;background:#0e0e0e;"></div>
<div class="ab" style="left:1648px;top:362px;width:37px;height:41px;background:#363438;border-bottom:1px solid #222124"></div>
<div class="ab" style="left:1657px;top:366px;width:1px;height:4px;background:#0e0e0e;"></div>
<div class="ab" style="left:1659px;top:366px;width:1px;height:4px;background:#0e0e0e;"></div>
<div class="ab" style="left:1661px;top:366px;width:1px;height:4px;background:#0e0e0e;"></div>
<div class="ab" style="left:1663px;top:366px;width:1px;height:4px;background:#0e0e0e;"></div>
<div class="ab" style="left:1665px;top:366px;width:1px;height:4px;background:#0e0e0e;"></div>
<div class="ab" style="left:1667px;top:366px;width:1px;height:4px;background:#0e0e0e;"></div>
<div class="ab" style="left:1669px;top:366px;width:1px;height:4px;background:#0e0e0e;"></div>
<div class="ab" style="left:1671px;top:366px;width:1px;height:4px;background:#0e0e0e;"></div>
<div class="ab" style="left:1673px;top:366px;width:1px;height:4px;background:#0e0e0e;"></div>
<div class="ab" style="left:1675px;top:366px;width:1px;height:4px;background:#0e0e0e;"></div>
<div class="ab" style="left:1648px;top:403px;width:37px;height:41px;background:#363438;border-bottom:1px solid #222124"></div>
<div class="ab" style="left:1657px;top:407px;width:1px;height:4px;background:#0e0e0e;"></div>
<div class="ab" style="left:1659px;top:407px;width:1px;height:4px;background:#0e0e0e;"></div>
<div class="ab" style="left:1661px;top:407px;width:1px;height:4px;background:#0e0e0e;"></div>
<div class="ab" style="left:1663px;top:407px;width:1px;height:4px;background:#0e0e0e;"></div>
<div class="ab" style="left:1665px;top:407px;width:1px;height:4px;background:#0e0e0e;"></div>
<div class="ab" style="left:1667px;top:407px;width:1px;height:4px;background:#0e0e0e;"></div>
<div class="ab" style="left:1669px;top:407px;width:1px;height:4px;background:#0e0e0e;"></div>
<div class="ab" style="left:1671px;top:407px;width:1px;height:4px;background:#0e0e0e;"></div>
<div class="ab" style="left:1673px;top:407px;width:1px;height:4px;background:#0e0e0e;"></div>
<div class="ab" style="left:1675px;top:407px;width:1px;height:4px;background:#0e0e0e;"></div>
<svg style="left:1656px;top:88px;" width="20" height="20" viewBox="0 0 20 20"><rect x="6" y="11" width="8" height="8" fill="#bdbdbd"/><path d="M7 12L4 7" stroke="#bdbdbd" stroke-width="1.5"/><ellipse cx="3.5" cy="5" rx="2.2" ry="3.5" transform="rotate(-25 3.5 5)" fill="#bdbdbd"/><path d="M10 12V5" stroke="#bdbdbd" stroke-width="1.5"/><ellipse cx="10" cy="3" rx="1.8" ry="2.8" fill="#bdbdbd"/><path d="M13 12L15 7" stroke="#bdbdbd" stroke-width="1.5"/><path d="M13 4L19 6L16 9Z" fill="#bdbdbd"/></svg>
<svg style="left:1656px;top:130px;" width="20" height="18" viewBox="0 0 20 18"><rect x="1" y="4" width="18" height="1.6" fill="#bdbdbd"/><ellipse cx="6" cy="4.8" rx="4" ry="2.6" fill="#bdbdbd"/><rect x="1" y="11" width="18" height="1.6" fill="#bdbdbd"/><path d="M12 11.8L18 8Q20 12 18 16Z" fill="#bdbdbd"/></svg>
<div class="t" style="left:1657px;top:171.76px;font-size:18px;color:#bdbdbd;">A</div>
<div class="ab" style="left:1672px;top:172px;width:1px;height:16px;background:#bdbdbd;"></div>
<svg style="left:1658px;top:212px;" width="16" height="18" viewBox="0 0 16 18"><rect x="1.5" y="1.5" width="4" height="4" fill="none" stroke="#bdbdbd"/><rect x="1.5" y="7.5" width="4" height="4" fill="none" stroke="#bdbdbd"/><rect x="1" y="13" width="5" height="5" fill="#bdbdbd"/><path d="M9 4Q15 4 14 10Q13 14 10 15" stroke="#bdbdbd" stroke-width="1.6" fill="none"/><path d="M8 2L11 6L8 6Z" fill="#bdbdbd"/></svg>
<svg style="left:1658px;top:253px;" width="18" height="18" viewBox="0 0 18 18"><circle cx="9" cy="9" r="8.5" fill="#bdbdbd"/><rect x="7.5" y="7.5" width="3" height="7" fill="#333"/><circle cx="9" cy="4.7" r="1.7" fill="#333"/></svg>
<svg style="left:1657px;top:294px;" width="20" height="18" viewBox="0 0 20 18"><path d="M10 1Q19 1 19 9Q19 17 10 17Q1 17 1 9Q1 1 10 1Z" fill="#bdbdbd"/><text x="4" y="13" font-family="Liberation Sans" font-weight="bold" font-size="10" fill="#333">ku</text></svg>
<svg style="left:1660px;top:335px;" width="12" height="17" viewBox="0 0 12 17"><path d="M6 1H11V16M9 1V16M6 1Q1 1 1 5Q1 9 6 9V1" fill="#bdbdbd" stroke="#bdbdbd" stroke-width="1.4"/></svg>
<svg style="left:1656px;top:376px;" width="20" height="18" viewBox="0 0 20 18"><path d="M2 4L6 2L10 4V9L6 11L2 9Z" fill="none" stroke="#bdbdbd" stroke-width="1.2"/><rect x="12" y="2" width="4" height="3" fill="#bdbdbd"/><rect x="12" y="7" width="4" height="3" fill="#bdbdbd"/><rect x="2" y="13" width="15" height="2" fill="#bdbdbd"/></svg>
<svg style="left:1657px;top:416px;" width="20" height="20" viewBox="0 0 20 20"><rect x="0" y="0" width="20" height="20" rx="6" fill="#e2e2e2"/><path d="M15 4Q8 3 6 8Q5 12 12 11Q16 12 11 17" stroke="#333" stroke-width="2.5" fill="none"/></svg>
<div class="ab" style="left:1688px;top:75px;width:232px;height:955px;background:#2c2a2e;"></div>
<div class="ab" style="left:1688px;top:75px;width:232px;height:18px;background:#1e1d20;"></div>
<div class="ab" style="left:1688px;top:75px;width:44px;height:18px;background:#2b2a2d;"></div>
<div class="t" style="left:1695px;top:78.69px;font-size:11px;color:#8a8a8a;font-weight:bold;letter-spacing:-0.2px">Color</div>
<div class="ab" style="left:1732px;top:75px;width:62px;height:18px;background:#383639;"></div>
<div class="t" style="left:1739px;top:78.69px;font-size:11px;color:#e4e4e4;font-weight:bold;letter-spacing:-0.45px">Swatches</div>
<svg style="left:1901px;top:80px;" width="14" height="8" viewBox="0 0 14 8"><path d="M0 2H5L2.5 5Z" fill="#cfcfcf"/><rect x="6" y="0" width="8" height="1" fill="#cfcfcf"/><rect x="6" y="2" width="8" height="1" fill="#cfcfcf"/><rect x="6" y="4" width="8" height="1" fill="#cfcfcf"/><rect x="6" y="6" width="8" height="1" fill="#cfcfcf"/></svg>
<div class="ab" style="left:1688px;top:93px;width:232px;height:1px;background:#262528;"></div>
<div class="ab" style="left:1688px;top:94px;width:11px;height:11px;background:#ff1e00;"></div>
<div class="ab" style="left:1700px;top:94px;width:11px;height:11px;background:#fff200;"></div>
<div class="ab" style="left:1712px;top:94px;width:11px;height:11px;background:#00d800;"></div>
<div class="ab" style="left:1724px;top:94px;width:11px;height:11px;background:#00e8ff;"></div>
<div class="ab" style="left:1736px;top:94px;width:11px;height:11px;background:#0008ff;"></div>
<div class="ab" style="left:1748px;top:94px;width:11px;height:11px;background:#ff20ff;"></div>
<div class="ab" style="left:1760px;top:94px;width:11px;height:11px;background:#ffffff;"></div>
<div class="ab" style="left:1772px;top:94px;width:11px;height:11px;background:#efedf0;"></div>
<div class="ab" style="left:1784px;top:94px;width:11px;height:11px;background:#e2e0e3;"></div>
<div class="ab" style="left:1796px;top:94px;width:11px;height:11px;background:#d6d4d7;"></div>
<div class="ab" style="left:1808px;top:94px;width:11px;height:11px;background:#cacacc;"></div>
<div class="ab" style="left:1820px;top:94px;width:11px;height:11px;background:#bebdbf;"></div>
<div class="ab" style="left:1832px;top:94px;width:11px;height:11px;background:#b2b1b3;"></div>
<div class="ab" style="left:1844px;top:94px;width:11px;height:11px;background:#a6a5a7;"></div>
<div class="ab" style="left:1856px;top:94px;width:11px;height:11px;background:#9a999b;"></div>
<div class="ab" style="left:1868px;top:94px;width:11px;height:11px;background:#8e8d8f;"></div>
<div class="ab" style="left:1880px;top:94px;width:11px;height:11px;background:#ff3020;"></div>
<div class="ab" style="left:1892px;top:94px;width:11px;height:11px;background:#ffe600;"></div>
<div class="ab" style="left:1688px;top:106px;width:11px;height:11px;background:#008f4e;"></div>
<div class="ab" style="left:1700px;top:106px;width:11px;height:11px;background:#00a0f0;"></div>
<div class="ab" style="left:1712px;top:106px;width:11px;height:11px;background:#33339a;"></div>
<div class="ab" style="left:1724px;top:106px;width:11px;height:11px;background:#ff1a8a;"></div>
<div class="ab" style="left:1736px;top:106px;width:11px;height:11px;background:#8e8c8f;"></div>
<div class="ab" style="left:1748px;top:106px;width:11px;height:11px;background:#828083;"></div>
<div class="ab" style="left:1760px;top:106px;width:11px;height:11px;background:#767477;"></div>
<div class="ab" style="left:1772px;top:106px;width:11px;height:11px;background:#6a686b;"></div>
<div class="ab" style="left:1784px;top:106px;width:11px;height:11px;background:#5a585b;"></div>
<div class="ab" style="left:1796px;top:106px;width:11px;height:11px;background:#4a484b;"></div>
<div class="ab" style="left:1808px;top:106px;width:11px;height:11px;background:#3a383b;"></div>
<div class="ab" style="left:1820px;top:106px;width:11px;height:11px;background:#2a282b;"></div>
<div class="ab" style="left:1832px;top:106px;width:11px;height:11px;background:#161416;"></div>
<div class="ab" style="left:1844px;top:106px;width:11px;height:11px;background:#030203;"></div>
<div class="ab" style="left:1856px;top:106px;width:11px;height:11px;background:#ff9f78;"></div>
<div class="ab" style="left:1868px;top:106px;width:11px;height:11px;background:#ffb284;"></div>
<div class="ab" style="left:1880px;top:106px;width:11px;height:11px;background:#ffc98c;"></div>
<div class="ab" style="left:1892px;top:106px;width:11px;height:11px;background:#fff0a0;"></div>
<div class="ab" style="left:1688px;top:118px;width:11px;height:11px;background:#c8d89c;"></div>
<div class="ab" style="left:1700px;top:118px;width:11px;height:11px;background:#a8cc9c;"></div>
<div class="ab" style="left:1712px;top:118px;width:11px;height:11px;background:#86c4a0;"></div>
<div class="ab" style="left:1724px;top:118px;width:11px;height:11px;background:#78c4c0;"></div>
<div class="ab" style="left:1736px;top:118px;width:11px;height:11px;background:#64c8f8;"></div>
<div class="ab" style="left:1748px;top:118px;width:11px;height:11px;background:#78a8e0;"></div>
<div class="ab" style="left:1760px;top:118px;width:11px;height:11px;background:#8494d0;"></div>
<div class="ab" style="left:1772px;top:118px;width:11px;height:11px;background:#8a88c8;"></div>
<div class="ab" style="left:1784px;top:118px;width:11px;height:11px;background:#a48ac8;"></div>
<div class="ab" style="left:1796px;top:118px;width:11px;height:11px;background:#bc90c8;"></div>
<div class="ab" style="left:1808px;top:118px;width:11px;height:11px;background:#ffa0c8;"></div>
<div class="ab" style="left:1820px;top:118px;width:11px;height:11px;background:#ffa0a0;"></div>
<div class="ab" style="left:1832px;top:118px;width:11px;height:11px;background:#ff7850;"></div>
<div class="ab" style="left:1844px;top:118px;width:11px;height:11px;background:#ff9c58;"></div>
<div class="ab" style="left:1856px;top:118px;width:11px;height:11px;background:#ffb45c;"></div>
<div class="ab" style="left:1868px;top:118px;width:11px;height:11px;background:#ffe870;"></div>
<div class="ab" style="left:1880px;top:118px;width:11px;height:11px;background:#acd080;"></div>
<div class="ab" style="left:1892px;top:118px;width:11px;height:11px;background:#80c080;"></div>
<div class="ab" style="left:1688px;top:130px;width:11px;height:11px;background:#38a878;"></div>
<div class="ab" style="left:1700px;top:130px;width:11px;height:11px;background:#10a8b8;"></div>
<div class="ab" style="left:1712px;top:130px;width:11px;height:11px;background:#00b0f8;"></div>
<div class="ab" style="left:1724px;top:130px;width:11px;height:11px;background:#3c90d8;"></div>
<div class="ab" style="left:1736px;top:130px;width:11px;height:11px;background:#4a78c4;"></div>
<div class="ab" style="left:1748px;top:130px;width:11px;height:11px;background:#5e62b0;"></div>
<div class="ab" style="left:1760px;top:130px;width:11px;height:11px;background:#8868b0;"></div>
<div class="ab" style="left:1772px;top:130px;width:11px;height:11px;background:#b46aa8;"></div>
<div class="ab" style="left:1784px;top:130px;width:11px;height:11px;background:#ff7aa8;"></div>
<div class="ab" style="left:1796px;top:130px;width:11px;height:11px;background:#ff7870;"></div>
<div class="ab" style="left:1808px;top:130px;width:11px;height:11px;background:#ff3020;"></div>
<div class="ab" style="left:1820px;top:130px;width:11px;height:11px;background:#ff7020;"></div>
<div class="ab" style="left:1832px;top:130px;width:11px;height:11px;background:#ff9c20;"></div>
<div class="ab" style="left:1844px;top:130px;width:11px;height:11px;background:#ffe000;"></div>
<div class="ab" style="left:1856px;top:130px;width:11px;height:11px;background:#8cc040;"></div>
<div class="ab" style="left:1868px;top:130px;width:11px;height:11px;background:#38a848;"></div>
<div class="ab" style="left:1880px;top:130px;width:11px;height:11px;background:#009a50;"></div>
<div class="ab" style="left:1892px;top:130px;width:11px;height:11px;background:#00a0a8;"></div>
<div class="ab" style="left:1688px;top:142px;width:11px;height:11px;background:#00a8f8;"></div>
<div class="ab" style="left:1700px;top:142px;width:11px;height:11px;background:#0078d0;"></div>
<div class="ab" style="left:1712px;top:142px;width:11px;height:11px;background:#0050b8;"></div>
<div class="ab" style="left:1724px;top:142px;width:11px;height:11px;background:#30389a;"></div>
<div class="ab" style="left:1736px;top:142px;width:11px;height:11px;background:#6a3898;"></div>
<div class="ab" style="left:1748px;top:142px;width:11px;height:11px;background:#a03898;"></div>
<div class="ab" style="left:1760px;top:142px;width:11px;height:11px;background:#ff2090;"></div>
<div class="ab" style="left:1772px;top:142px;width:11px;height:11px;background:#ff3060;"></div>
<div class="ab" style="left:1784px;top:142px;width:11px;height:11px;background:#c01818;"></div>
<div class="ab" style="left:1796px;top:142px;width:11px;height:11px;background:#b84a10;"></div>
<div class="ab" style="left:1808px;top:142px;width:11px;height:11px;background:#b87010;"></div>
<div class="ab" style="left:1820px;top:142px;width:11px;height:11px;background:#c0a000;"></div>
<div class="ab" style="left:1832px;top:142px;width:11px;height:11px;background:#5a8a28;"></div>
<div class="ab" style="left:1844px;top:142px;width:11px;height:11px;background:#187a38;"></div>
<div class="ab" style="left:1856px;top:142px;width:11px;height:11px;background:#00703c;"></div>
<div class="ab" style="left:1868px;top:142px;width:11px;height:11px;background:#00707a;"></div>
<div class="ab" style="left:1880px;top:142px;width:11px;height:11px;background:#0070b8;"></div>
<div class="ab" style="left:1892px;top:142px;width:11px;height:11px;background:#004898;"></div>
<div class="ab" style="left:1688px;top:154px;width:11px;height:11px;background:#003a88;"></div>
<div class="ab" style="left:1700px;top:154px;width:11px;height:11px;background:#1e1a78;"></div>
<div class="ab" style="left:1712px;top:154px;width:11px;height:11px;background:#4a1a78;"></div>
<div class="ab" style="left:1724px;top:154px;width:11px;height:11px;background:#701870;"></div>
<div class="ab" style="left:1736px;top:154px;width:11px;height:11px;background:#b81868;"></div>
<div class="ab" style="left:1748px;top:154px;width:11px;height:11px;background:#c01840;"></div>
<div class="ab" style="left:1760px;top:154px;width:11px;height:11px;background:#901008;"></div>
<div class="ab" style="left:1772px;top:154px;width:11px;height:11px;background:#883808;"></div>
<div class="ab" style="left:1784px;top:154px;width:11px;height:11px;background:#885008;"></div>
<div class="ab" style="left:1796px;top:154px;width:11px;height:11px;background:#887800;"></div>
<div class="ab" style="left:1808px;top:154px;width:11px;height:11px;background:#3c6020;"></div>
<div class="ab" style="left:1820px;top:154px;width:11px;height:11px;background:#005a28;"></div>
<div class="ab" style="left:1832px;top:154px;width:11px;height:11px;background:#004a28;"></div>
<div class="ab" style="left:1844px;top:154px;width:11px;height:11px;background:#005058;"></div>
<div class="ab" style="left:1856px;top:154px;width:11px;height:11px;background:#00508e;"></div>
<div class="ab" style="left:1868px;top:154px;width:11px;height:11px;background:#003870;"></div>
<div class="ab" style="left:1880px;top:154px;width:11px;height:11px;background:#002468;"></div>
<div class="ab" style="left:1892px;top:154px;width:11px;height:11px;background:#100a58;"></div>
<div class="ab" style="left:1688px;top:166px;width:11px;height:11px;background:#380a60;"></div>
<div class="ab" style="left:1700px;top:166px;width:11px;height:11px;background:#580a48;"></div>
<div class="ab" style="left:1712px;top:166px;width:11px;height:11px;background:#8a0a48;"></div>
<div class="ab" style="left:1724px;top:166px;width:11px;height:11px;background:#8a0a28;"></div>
<div class="ab" style="left:1736px;top:166px;width:11px;height:11px;background:#d8b8a0;"></div>
<div class="ab" style="left:1748px;top:166px;width:11px;height:11px;background:#a89080;"></div>
<div class="ab" style="left:1760px;top:166px;width:11px;height:11px;background:#7a6a60;"></div>
<div class="ab" style="left:1772px;top:166px;width:11px;height:11px;background:#5a504a;"></div>
<div class="ab" style="left:1784px;top:166px;width:11px;height:11px;background:#403838;"></div>
<div class="ab" style="left:1796px;top:166px;width:11px;height:11px;background:#d0a070;"></div>
<div class="ab" style="left:1808px;top:166px;width:11px;height:11px;background:#b08050;"></div>
<div class="ab" style="left:1820px;top:166px;width:11px;height:11px;background:#906040;"></div>
<div class="ab" style="left:1832px;top:166px;width:11px;height:11px;background:#805028;"></div>
<div class="ab" style="left:1844px;top:166px;width:11px;height:11px;background:#704018;"></div>
<div class="ab" style="left:1856px;top:166px;width:11px;height:11px;background:#7090e0;"></div>
<div class="ab" style="left:1868px;top:166px;width:11px;height:11px;background:#ff5a40;"></div>
<div class="ab" style="left:1880px;top:166px;width:11px;height:11px;background:#ffc848;"></div>
<div class="ab" style="left:1892px;top:166px;width:11px;height:11px;background:#ff9010;"></div>
<div class="ab" style="left:1688px;top:178px;width:11px;height:11px;background:#2a2c38;"></div>
<div class="ab" style="left:1700px;top:178px;width:11px;height:11px;background:#222226;"></div>
<div class="ab" style="left:1712px;top:178px;width:11px;height:11px;background:#8e8e96;"></div>
<div class="ab" style="left:1724px;top:178px;width:11px;height:11px;background:#a0c000;"></div>
<div class="ab" style="left:1903px;top:94px;width:13px;height:376px;background:linear-gradient(90deg,#1f1e21,#252327 50%,#1f1e21);"></div>
<div class="ab" style="left:1688px;top:470px;width:232px;height:14px;background:#333135;border-top:1px solid #2a292c"></div>
<svg style="left:1851px;top:472px;" width="10" height="10" viewBox="0 0 10 10"><path d="M0 0H10V10H4V6H0Z" fill="#9e9e9e"/><path d="M0 7H3V10Z" fill="#9e9e9e"/></svg>
<svg style="left:1879px;top:471px;" width="11" height="12" viewBox="0 0 11 12"><rect x="0" y="2" width="11" height="1.3" fill="#888"/><rect x="4" y="0" width="3" height="2" fill="#888"/><path d="M1.5 4H9.5L9 12H2Z" fill="#888"/><path d="M3.7 5V11M5.5 5V11M7.3 5V11" stroke="#444" stroke-width="0.7"/></svg>
<div class="ab" style="left:1688px;top:484px;width:232px;height:3px;background:#1d1c1f;"></div>
<div class="ab" style="left:1688px;top:487px;width:232px;height:18px;background:#1e1d20;"></div>
<div class="ab" style="left:1689px;top:487px;width:79px;height:18px;background:#383639;"></div>
<div class="t" style="left:1695px;top:490.69px;font-size:11px;color:#e4e4e4;font-weight:bold;letter-spacing:-0.3px">Adjustments</div>
<div class="ab" style="left:1768px;top:487px;width:44px;height:18px;background:#2b2a2d;"></div>
<div class="t" style="left:1775px;top:490.69px;font-size:11px;color:#8a8a8a;font-weight:bold;letter-spacing:-0.2px">Styles</div>
<svg style="left:1901px;top:492px;" width="14" height="8" viewBox="0 0 14 8"><path d="M0 2H5L2.5 5Z" fill="#cfcfcf"/><rect x="6" y="0" width="8" height="1" fill="#cfcfcf"/><rect x="6" y="2" width="8" height="1" fill="#cfcfcf"/><rect x="6" y="4" width="8" height="1" fill="#cfcfcf"/><rect x="6" y="6" width="8" height="1" fill="#cfcfcf"/></svg>
<div class="ab" style="left:1688px;top:505px;width:232px;height:109px;background:#333135;"></div>
<div class="t" style="left:1697px;top:510.84px;font-size:12px;color:#a8a8a8;font-weight:bold;letter-spacing:-0.05px">Add an adjustment</div>
<svg style="left:1686px;top:530px;" width="180" height="80" viewBox="0 0 180 80"><defs><linearGradient id="ag1" x1="0" y1="0" x2="1" y2="0"><stop offset="0" stop-color="#2a2a2a"/><stop offset="1" stop-color="#d8d8d8"/></linearGradient><linearGradient id="ag2" x1="0" y1="0" x2="0" y2="1"><stop offset="0" stop-color="#e0e0e0"/><stop offset="1" stop-color="#8a8a8a"/></linearGradient><radialGradient id="ag3" cx="0.5" cy="0.35" r="0.6"><stop offset="0" stop-color="#555"/><stop offset="1" stop-color="#d8d8d8"/></radialGradient></defs></svg>
<svg style="left:1735px;top:533px;" width="19" height="19" viewBox="0 0 19 19"><path d="M9.5 0.5V3M9.5 16V18.5M0.5 9.5H3M16 9.5H18.5M3 3L4.7 4.7M14.3 14.3L16 16M3 16L4.7 14.3M14.3 4.7L16 3" stroke="#c4c4c4" stroke-width="1.6"/><circle cx="9.5" cy="9.5" r="4.3" fill="none" stroke="#c4c4c4" stroke-width="1.2"/><path d="M9.5 5.2A4.3 4.3 0 0 1 9.5 13.8Z" fill="#c4c4c4"/></svg>
<svg style="left:1760px;top:535px;" width="19" height="13" viewBox="0 0 19 13"><path d="M0 13V6L1 4V8L2 6V3L3 7L4 5V9L5 6V2L6 5L7 4V8L8 2V0.5L9 5L10 1V6L11 4L12 7V3L13 6V8L14 5L15 3V7L16 4L17 6V5L18 8V13Z" fill="url(#ag2)"/><rect x="0" y="9" width="18.5" height="4" fill="#bdbdbd"/></svg>
<svg style="left:1785px;top:535px;" width="17" height="15" viewBox="0 0 17 15"><rect x="0.5" y="0.5" width="16" height="14" fill="#3a393d" stroke="#c4c4c4"/><path d="M0.5 5H16.5M0.5 10H16.5M6 0.5V14.5M11 0.5V14.5" stroke="#8a8a8a" stroke-width="0.8"/><path d="M1 14Q8 14 9 8Q10 1 16 1" stroke="#e8e8e8" stroke-width="1.3" fill="none"/></svg>
<svg style="left:1809px;top:536px;" width="17" height="14" viewBox="0 0 17 14"><rect x="0.5" y="0.5" width="16" height="13" fill="#3a393d" stroke="#c4c4c4"/><path d="M1 13.5L16.5 1V13.5Z" fill="url(#ag2)"/><path d="M2.5 4H7M4.75 1.8V6.2" stroke="#c4c4c4" stroke-width="1.3"/><path d="M10.5 10.5H14.5" stroke="#333" stroke-width="1.3"/></svg>
<svg style="left:1833px;top:535px;" width="17" height="16" viewBox="0 0 17 16"><path d="M0.5 0.5H16.5L8.5 15.5Z" fill="url(#ag3)"/></svg>
<svg style="left:1725px;top:562px;" width="17" height="15" viewBox="0 0 17 15"><rect x="0.5" y="0.5" width="16" height="14" fill="#555" stroke="#c4c4c4"/><rect x="1" y="1" width="15" height="6" fill="#cfcfcf"/><path d="M4 1V7M8 1V7M12 1V7" stroke="#777" stroke-width="1.6"/><rect x="1" y="8" width="15" height="6" fill="url(#ag1)"/></svg>
<svg style="left:1748px;top:561px;" width="18" height="16" viewBox="0 0 18 16"><path d="M9 1V14M2 4H16M6 15H12" stroke="#c4c4c4" stroke-width="1.5"/><path d="M7 2L9 0L11 2Z" fill="#c4c4c4"/><path d="M2 4L0 10M2 4L4 10M16 4L14 10M16 4L18 10" stroke="#c4c4c4" stroke-width="0.9"/><path d="M0 10H4Q4 14 2 14Q0 14 0 10ZM14 10H18Q18 14 16 14Q14 14 14 10Z" fill="#c4c4c4"/></svg>
<svg style="left:1773px;top:563px;" width="17" height="14" viewBox="0 0 17 14"><rect x="0.5" y="0.5" width="16" height="13" fill="url(#ag1)" stroke="#c4c4c4"/><rect x="1" y="1" width="7" height="12" fill="#2e2d31"/><rect x="8" y="1" width="8" height="12" fill="#bdbdbd"/><rect x="1.5" y="1.5" width="6" height="11" fill="none" stroke="#cfcfcf" stroke-width="0.8"/></svg>
<svg style="left:1796px;top:561px;" width="18" height="18" viewBox="0 0 18 18"><path d="M0 3H3L4 1H8L9 3H13V10H0Z" fill="#cfcfcf"/><circle cx="6.5" cy="6.5" r="2.5" fill="#555"/><circle cx="11.5" cy="11.5" r="5.5" fill="#6a696d" stroke="#cfcfcf" stroke-width="1"/></svg>
<svg style="left:1820px;top:561px;" width="17" height="17" viewBox="0 0 17 17"><circle cx="8.5" cy="5" r="4.5" fill="#cfcfcf"/><circle cx="4.7" cy="11.8" r="4.5" fill="#aaa"/><circle cx="12.3" cy="11.8" r="4.5" fill="#8e8e8e"/><path d="M6 8L8.5 11L11 8L9.5 12H7.5Z" fill="#444"/></svg>
<svg style="left:1845px;top:563px;" width="17" height="14" viewBox="0 0 17 14"><rect x="0.5" y="0.5" width="16" height="13" fill="#444" stroke="#c4c4c4"/><rect x="1" y="1" width="5" height="4" fill="#aaa"/><rect x="6" y="1" width="5" height="4" fill="#777"/><rect x="11" y="1" width="5" height="4" fill="#555"/><rect x="1" y="5" width="5" height="4" fill="#888"/><rect x="6" y="5" width="5" height="4" fill="#333"/><rect x="11" y="5" width="5" height="4" fill="#444"/><rect x="1" y="9" width="5" height="4" fill="#333"/><rect x="6" y="9" width="5" height="4" fill="#222"/><rect x="11" y="9" width="5" height="4" fill="#111"/><path d="M6 1V13M11 1V13M1 5H16M1 9H16" stroke="#cfcfcf" stroke-width="0.7"/></svg>
<svg style="left:1737px;top:589px;" width="17" height="14" viewBox="0 0 17 14"><rect x="0.5" y="0.5" width="16" height="13" fill="url(#ag2)" stroke="#c4c4c4"/><path d="M1 13.5L16 0.5" stroke="#333" stroke-width="1"/><ellipse cx="8.5" cy="7.5" rx="4.5" ry="3" transform="rotate(-35 8.5 7.5)" fill="#2a2a2a"/></svg>
<svg style="left:1761px;top:589px;" width="17" height="14" viewBox="0 0 17 14"><defs><linearGradient id="ps" x1="0" y1="0" x2="1" y2="1"><stop offset="0" stop-color="#555"/><stop offset="0.25" stop-color="#ccc"/><stop offset="0.5" stop-color="#555"/><stop offset="0.75" stop-color="#ccc"/><stop offset="1" stop-color="#555"/></linearGradient></defs><rect x="0.5" y="0.5" width="16" height="13" fill="url(#ps)" stroke="#c4c4c4"/></svg>
<svg style="left:1785px;top:589px;" width="17" height="14" viewBox="0 0 17 14"><rect x="0.5" y="0.5" width="16" height="13" fill="#cfcfcf" stroke="#c4c4c4"/><path d="M1 9L4 7L6 8L9 5L11 5L14 2L16 3V5L13 7L11 8L8 10L5 10L2 12Z" fill="#222"/><path d="M8 12L13 11L16 10V12H8Z" fill="#222"/></svg>
<svg style="left:1809px;top:589px;" width="17" height="14" viewBox="0 0 17 14"><rect x="0.5" y="0.5" width="16" height="13" fill="#888" stroke="#c4c4c4"/><path d="M1 1H16L8.5 7Z" fill="#cfcfcf"/><path d="M1 13H16L8.5 7Z" fill="#6a6a6a"/></svg>
<svg style="left:1833px;top:589px;" width="17" height="14" viewBox="0 0 17 14"><rect x="0.5" y="0.5" width="16" height="13" fill="url(#ag1)" stroke="#c4c4c4"/></svg>
<div class="ab" style="left:1688px;top:614px;width:232px;height:5px;background:#1d1c1f;"></div>
<div class="ab" style="left:1688px;top:619px;width:232px;height:17px;background:#1e1d20;"></div>
<div class="ab" style="left:1689px;top:619px;width:46px;height:17px;background:#383639;"></div>
<div class="t" style="left:1695px;top:622.69px;font-size:11px;color:#e4e4e4;font-weight:bold;letter-spacing:-0.3px">Layers</div>
<div class="ab" style="left:1735px;top:619px;width:62px;height:17px;background:#2b2a2d;"></div>
<div class="t" style="left:1742px;top:622.69px;font-size:11px;color:#8a8a8a;font-weight:bold;letter-spacing:-0.3px">Channels</div>
<div class="ab" style="left:1797px;top:619px;width:45px;height:17px;background:#2b2a2d;"></div>
<div class="t" style="left:1805px;top:622.69px;font-size:11px;color:#8a8a8a;font-weight:bold;letter-spacing:-0.3px">Paths</div>
<svg style="left:1901px;top:624px;" width="14" height="8" viewBox="0 0 14 8"><path d="M0 2H5L2.5 5Z" fill="#cfcfcf"/><rect x="6" y="0" width="8" height="1" fill="#cfcfcf"/><rect x="6" y="2" width="8" height="1" fill="#cfcfcf"/><rect x="6" y="4" width="8" height="1" fill="#cfcfcf"/><rect x="6" y="6" width="8" height="1" fill="#cfcfcf"/></svg>
<div class="ab" style="left:1688px;top:636px;width:232px;height:1px;background:#262528;"></div>
<div class="ab" style="left:1688px;top:637px;width:232px;height:110px;background:#333135;"></div>
<div class="ab" style="left:1692px;top:640px;width:77px;height:20px;background:#38363a;border:1px solid #29282b;border-radius:3px"></div>
<svg style="left:1698px;top:645px;" width="10" height="10" viewBox="0 0 10 10"><circle cx="6" cy="4" r="3" fill="none" stroke="#8a8a8a" stroke-width="1.2"/><path d="M4 6L1 9" stroke="#8a8a8a" stroke-width="1.4"/></svg>
<div class="t" style="left:1713px;top:644.69px;font-size:11px;color:#8e8e8e;">Kind</div>
<svg style="left:1758px;top:645px;" width="7" height="11" viewBox="0 0 7 11"><path d="M0 4L3.5 0L7 4ZM0 6L3.5 10L7 6Z" fill="#8e8e8e"/></svg>
<svg style="left:1781px;top:643px;" width="14" height="13" viewBox="0 0 14 13"><rect x="0.5" y="1.5" width="13" height="10" fill="none" stroke="#8a8a8a"/><path d="M2 10L5 6L8 9L10 7L12 10Z" fill="#8a8a8a"/><circle cx="10" cy="4" r="1" fill="#8a8a8a"/></svg>
<svg style="left:1806px;top:643px;" width="13" height="13" viewBox="0 0 13 13"><circle cx="6.5" cy="6.5" r="6" fill="#8a8a8a"/><path d="M11 2L2 11A6 6 0 0 1 11 2Z" fill="#38363a"/></svg>
<div class="t" style="left:1829px;top:643.15px;font-size:14px;color:#8a8a8a;font-family:'Liberation Serif',serif">T</div>
<svg style="left:1853px;top:643px;" width="14" height="14" viewBox="0 0 14 14"><rect x="2" y="2" width="10" height="10" fill="none" stroke="#8a8a8a"/><rect x="0" y="0" width="3" height="3" fill="#8a8a8a"/><rect x="11" y="0" width="3" height="3" fill="#8a8a8a"/><rect x="0" y="11" width="3" height="3" fill="#8a8a8a"/><rect x="11" y="11" width="3" height="3" fill="#8a8a8a"/></svg>
<svg style="left:1877px;top:642px;" width="14" height="15" viewBox="0 0 14 15"><path d="M4 1H9L12 4V9H4Z" fill="none" stroke="#8a8a8a"/><rect x="1" y="8" width="7" height="6" fill="#8a8a8a"/></svg>
<div class="ab" style="left:1904px;top:640px;width:11px;height:20px;background:#29282b;border-radius:2px"></div>
<div class="ab" style="left:1906px;top:642px;width:7px;height:8px;background:#555;"></div>
<div class="ab" style="left:1688px;top:663px;width:232px;height:1px;background:#29282b;"></div>
<div class="ab" style="left:1693px;top:668px;width:109px;height:20px;background:#38363a;border:1px solid #29282b;border-radius:3px"></div>
<div class="t" style="left:1700px;top:672.69px;font-size:11px;color:#8e8e8e;">Normal</div>
<svg style="left:1791px;top:673px;" width="7" height="11" viewBox="0 0 7 11"><path d="M0 4L3.5 0L7 4ZM0 6L3.5 10L7 6Z" fill="#8e8e8e"/></svg>
<div class="t" style="left:1808px;top:672.69px;font-size:11px;color:#8e8e8e;">Opacity:</div>
<div class="ab" style="left:1856px;top:668px;width:58px;height:20px;background:#2e2c30;border:1px solid #29282b;border-radius:2px"></div>
<div class="t" style="left:1861px;top:672.69px;font-size:11px;color:#6e6e6e;">100%</div>
<div class="ab" style="left:1890px;top:669px;width:23px;height:18px;background:#38363a;"></div>
<svg style="left:1898px;top:676px;" width="7" height="5" viewBox="0 0 7 5"><path d="M0 0H7L3.5 4Z" fill="#8e8e8e"/></svg>
<div class="ab" style="left:1688px;top:692px;width:232px;height:1px;background:#29282b;"></div>
<div class="t" style="left:1694px;top:700.69px;font-size:11px;color:#8e8e8e;">Unify:</div>
<svg style="left:1728px;top:698px;" width="16" height="16" viewBox="0 0 16 16"><path d="M2 2L8 8M5 1L10 6L7 9L2 4Z" fill="#8a8a8a" stroke="#8a8a8a"/><circle cx="11" cy="12" r="2.5" fill="none" stroke="#8a8a8a"/><circle cx="13" cy="12" r="2.5" fill="none" stroke="#8a8a8a"/></svg>
<svg style="left:1748px;top:698px;" width="18" height="16" viewBox="0 0 18 16"><ellipse cx="7" cy="6" rx="6" ry="4" fill="none" stroke="#8a8a8a" stroke-width="1.2"/><circle cx="7" cy="6" r="2" fill="#8a8a8a"/><circle cx="11" cy="12" r="2.5" fill="none" stroke="#8a8a8a"/><circle cx="14" cy="12" r="2.5" fill="none" stroke="#8a8a8a"/></svg>
<div class="t" style="left:1772px;top:700.0px;font-size:13px;color:#8a8a8a;font-style:italic;font-family:'Liberation Serif',serif">fx</div>
<svg style="left:1783px;top:705px;" width="10" height="8" viewBox="0 0 10 8"><circle cx="3" cy="4" r="2.5" fill="none" stroke="#8a8a8a"/><circle cx="6" cy="4" r="2.5" fill="none" stroke="#8a8a8a"/></svg>
<div class="ab" style="left:1800px;top:699px;width:13px;height:13px;background:#2e2c30;border:1px solid #555"></div>
<svg style="left:1801px;top:700px;" width="11" height="11" viewBox="0 0 11 11"><path d="M1 5L4 8.5L10 1" fill="none" stroke="#8e8e8e" stroke-width="1.6"/></svg>
<div class="t" style="left:1818px;top:700.69px;font-size:11px;color:#8e8e8e;letter-spacing:-0.25px">Propagate Frame 1</div>
<div class="ab" style="left:1688px;top:720px;width:232px;height:1px;background:#29282b;"></div>
<div class="t" style="left:1694px;top:728.69px;font-size:11px;color:#8e8e8e;">Lock:</div>
<svg style="left:1730px;top:728px;" width="10" height="10" viewBox="0 0 10 10"><rect x="0" y="0" width="5" height="5" fill="#777"/><rect x="5" y="5" width="5" height="5" fill="#777"/><rect x="5" y="0" width="5" height="5" fill="#444"/><rect x="0" y="5" width="5" height="5" fill="#444"/></svg>
<svg style="left:1750px;top:726px;" width="14" height="14" viewBox="0 0 14 14"><path d="M13 1L5 9" stroke="#8a8a8a" stroke-width="1.6"/><path d="M5 9Q1 9 1 13Q4 13 6 11Z" fill="#8a8a8a"/></svg>
<svg style="left:1772px;top:726px;" width="14" height="14" viewBox="0 0 14 14"><path d="M7 1V13M1 7H13M7 0L5 2.5H9ZM7 14L5 11.5H9ZM0 7L2.5 5V9ZM14 7L11.5 5V9Z" stroke="#8a8a8a" fill="#8a8a8a" stroke-width="1"/></svg>
<svg style="left:1796px;top:726px;" width="11" height="14" viewBox="0 0 11 14"><path d="M2.5 6V4Q2.5 1 5.5 1Q8.5 1 8.5 4V6" fill="none" stroke="#8a8a8a" stroke-width="1.5"/><rect x="1" y="6" width="9" height="7" fill="#8a8a8a"/></svg>
<div class="t" style="left:1833px;top:728.69px;font-size:11px;color:#8e8e8e;">Fill:</div>
<div class="ab" style="left:1856px;top:724px;width:58px;height:20px;background:#2e2c30;border:1px solid #29282b;border-radius:2px"></div>
<div class="t" style="left:1861px;top:728.69px;font-size:11px;color:#6e6e6e;">100%</div>
<div class="ab" style="left:1890px;top:725px;width:23px;height:18px;background:#38363a;"></div>
<svg style="left:1898px;top:732px;" width="7" height="5" viewBox="0 0 7 5"><path d="M0 0H7L3.5 4Z" fill="#8e8e8e"/></svg>
<div class="ab" style="left:1688px;top:746px;width:232px;height:1px;background:#29282b;"></div>
<div class="ab" style="left:1688px;top:747px;width:216px;height:25px;background:#333135;"></div>
<div class="ab" style="left:1719px;top:748px;width:185px;height:24px;background:#4b5269;"></div>
<svg style="left:1695px;top:754px;" width="16" height="11" viewBox="0 0 16 11"><path d="M1 5.5Q8 -2 15 5.5Q8 13 1 5.5Z" fill="none" stroke="#d0d0d0" stroke-width="1.3"/><circle cx="8" cy="5.5" r="2.5" fill="#d0d0d0"/></svg>
<svg style="left:1720px;top:750px;" width="37" height="21" viewBox="0 0 37 21"><path d="M0.5 6V0.5H10M27 0.5H36.5V6M36.5 15V20.5H27M10 20.5H0.5V15" fill="none" stroke="#e8e8e8" stroke-width="1.2"/></svg>
<div class="ab" style="left:1729px;top:751px;width:18px;height:18px;background:#ff24ff;border:1px solid #222"></div>
<div class="t" style="left:1764px;top:754.43px;font-size:11.3px;color:#e4e4e4;letter-spacing:-0.15px">Background</div>
<svg style="left:1877px;top:753px;" width="11" height="14" viewBox="0 0 11 14"><path d="M2.5 6V4Q2.5 1 5.5 1Q8.5 1 8.5 4V6" fill="none" stroke="#d0d0d0" stroke-width="1.5"/><rect x="1" y="6" width="9" height="7" fill="#d0d0d0"/></svg>
<div class="ab" style="left:1688px;top:772px;width:216px;height:1px;background:#29282b;"></div>
<div class="ab" style="left:1903px;top:747px;width:13px;height:264px;background:linear-gradient(90deg,#1f1e21,#252327 50%,#1f1e21);"></div>
<div class="ab" style="left:1688px;top:1010px;width:232px;height:20px;background:#363438;border-top:1px solid #444246"></div>
<svg style="left:1715px;top:1016px;" width="16" height="10" viewBox="0 0 16 10"><rect x="1" y="2" width="8" height="6" rx="3" fill="none" stroke="#7a7a7a" stroke-width="1.5"/><rect x="7" y="2" width="8" height="6" rx="3" fill="none" stroke="#7a7a7a" stroke-width="1.5"/></svg>
<div class="t" style="left:1743px;top:1014.0px;font-size:13px;color:#7a7a7a;font-style:italic;font-family:'Liberation Serif',serif">fx</div>
<svg style="left:1771px;top:1014px;" width="14" height="12" viewBox="0 0 14 12"><rect x="0" y="0" width="14" height="12" fill="#7a7a7a"/><circle cx="7" cy="6" r="3.5" fill="#333"/></svg>
<svg style="left:1798px;top:1014px;" width="12" height="12" viewBox="0 0 12 12"><circle cx="6" cy="6" r="5.5" fill="#7a7a7a"/><path d="M10 2L2 10A5.5 5.5 0 0 1 10 2Z" fill="#333"/><circle cx="6" cy="6" r="5.5" fill="none" stroke="#7a7a7a"/></svg>
<svg style="left:1824px;top:1014px;" width="14" height="11" viewBox="0 0 14 11"><path d="M0 1H5L6 2.5H13V11H0Z" fill="#7a7a7a"/></svg>
<svg style="left:1853px;top:1016px;" width="10" height="10" viewBox="0 0 10 10"><path d="M0 0H10V10H4V6H0Z" fill="#7a7a7a"/><path d="M0 7H3V10Z" fill="#7a7a7a"/></svg>
<svg style="left:1879px;top:1013px;" width="11" height="12" viewBox="0 0 11 12"><rect x="0" y="2" width="11" height="1.3" fill="#7a7a7a"/><rect x="4" y="0" width="3" height="2" fill="#7a7a7a"/><path d="M1.5 4H9.5L9 12H2Z" fill="#7a7a7a"/><path d="M3.7 5V11M5.5 5V11M7.3 5V11" stroke="#333" stroke-width="0.7"/></svg>
<div class="ab" style="left:1916px;top:63px;width:4px;height:967px;background:#29282b;"></div>
<div class="ab" style="left:0px;top:1030px;width:1920px;height:50px;background:linear-gradient(90deg,#2c211c 0px,#281e19 445px,#36281e 560px,#2a1f1a 735px,#33241e 1000px,#372820 1150px,#2b1e1c 1230px,#3a2020 1320px,#2e1f20 1500px,#30231d 1640px,#2e221c 1920px);"></div>
<svg style="left:20px;top:1045px;" width="21" height="21" viewBox="0 0 21 21"><path d="M0 3L8.5 1.8V10H0ZM9.5 1.6L21 0V10H9.5ZM0 11H8.5V19.2L0 18ZM9.5 11H21V21L9.5 19.4Z" fill="#ffffff"/></svg>
<svg style="left:80px;top:1043px;" width="28" height="24" viewBox="0 0 28 24"><path d="M0 3Q0 1 2 1H10L12 3H26Q28 3 28 5V22Q28 24 26 24H2Q0 24 0 22Z" fill="#f3c240"/><path d="M0 7H28V22Q28 24 26 24H2Q0 24 0 22Z" fill="#ffd966"/><rect x="6" y="12" width="16" height="12" fill="#2f8fe0"/><rect x="10" y="16" width="8" height="8" fill="#ffd966"/></svg>
<svg style="left:143px;top:1043px;" width="30" height="28" viewBox="0 0 30 28"><rect x="0" y="0" width="24" height="21" rx="3" fill="#7289da"/><path d="M5 14Q5 7 8 6Q12 5 16 6Q19 7 19 14Q16 17 12 16Q8 17 5 14Z" fill="#ffffff"/><circle cx="9.5" cy="11.5" r="1.5" fill="#7289da"/><circle cx="14.5" cy="11.5" r="1.5" fill="#7289da"/><circle cx="21" cy="19" r="8" fill="#f04747" stroke="#2b1f1d" stroke-width="1"/><circle cx="21" cy="19" r="3.5" fill="#ffffff"/></svg>
<svg style="left:203px;top:1041px;" width="29" height="29" viewBox="0 0 29 29"><defs><linearGradient id="st" x1="0" y1="0" x2="0" y2="1"><stop offset="0" stop-color="#1a3a6a"/><stop offset="1" stop-color="#0b5aa0"/></linearGradient></defs><circle cx="14.5" cy="14.5" r="14" fill="url(#st)"/><circle cx="19" cy="10" r="5" fill="none" stroke="#fff" stroke-width="2"/><circle cx="19" cy="10" r="2.5" fill="#fff"/><path d="M1 16L10 20" stroke="#fff" stroke-width="3"/><circle cx="10" cy="20" r="3.5" fill="none" stroke="#fff" stroke-width="1.6"/></svg>
<svg style="left:265px;top:1041px;" width="30" height="29" viewBox="0 0 30 29"><defs><radialGradient id="ff" cx="0.4" cy="0.6" r="0.7"><stop offset="0" stop-color="#ffbd4f"/><stop offset="0.5" stop-color="#ff7139"/><stop offset="1" stop-color="#e31587"/></radialGradient></defs><circle cx="15" cy="15" r="13.5" fill="url(#ff)"/><path d="M22 2Q30 10 27 20Q24 28 14 28Q24 22 22 12Q20 6 22 2Z" fill="#ffd43b"/><circle cx="13" cy="14" r="6" fill="#592acb"/><path d="M8 12Q10 8 14 10Q17 12 14 15" fill="#ff9640"/></svg>
<div class="ab" style="left:312px;top:1030px;width:61px;height:50px;background:#4d4240;"></div>
<svg style="left:328px;top:1041px;" width="28" height="27" viewBox="0 0 28 27"><rect x="1" y="1" width="26" height="25" fill="#001e36" stroke="#31a8ff" stroke-width="2"/><text x="6" y="19" font-family="Liberation Sans" font-weight="bold" font-size="13" fill="#31a8ff">Ps</text></svg>
<div class="ab" style="left:69px;top:1077px;width:51px;height:3px;background:#76b9ed;"></div>
<div class="ab" style="left:131px;top:1077px;width:51px;height:3px;background:#76b9ed;"></div>
<div class="ab" style="left:193px;top:1077px;width:51px;height:3px;background:#76b9ed;"></div>
<div class="ab" style="left:255px;top:1077px;width:51px;height:3px;background:#76b9ed;"></div>
<div class="ab" style="left:312px;top:1077px;width:61px;height:3px;background:#76b9ed;"></div>
<svg style="left:1656px;top:1049px;" width="16" height="10" viewBox="0 0 16 10"><path d="M1 9L8 2L15 9" fill="none" stroke="#fff" stroke-width="1.3"/></svg>
<svg style="left:1684px;top:1048px;" width="22" height="13" viewBox="0 0 22 13"><path d="M5 12Q0 12 0 8Q0 5 4 5Q5 1 10 1Q15 1 16 5Q21 5 21 9Q21 12 17 12Z" fill="#e8e8e8"/><path d="M0 9Q3 6 9 8L21 10V12H4Q0 12 0 9Z" fill="#bdbdbd"/></svg>
<svg style="left:1717px;top:1046px;" width="18" height="17" viewBox="0 0 18 17"><path d="M1 9Q9 1 17 9M4 12Q9 7 14 12M7 15Q9 13 11 15" fill="none" stroke="#ddd" stroke-width="1.3"/><circle cx="13" cy="15" r="1.5" fill="#fff"/></svg>
<svg style="left:1744px;top:1046px;" width="22" height="17" viewBox="0 0 22 17"><path d="M1 6H5L10 1V16L5 11H1Z" fill="none" stroke="#ddd" stroke-width="1.2"/><path d="M13 5Q15 8.5 13 12M16 3Q19 8.5 16 14M19 1Q23 8.5 19 16" fill="none" stroke="#ccc" stroke-width="1.1"/></svg>
<div class="t" style="left:1786px;top:1037.15px;font-size:14px;color:#f2f2f2;">2:27 PM</div>
<div class="t" style="left:1782px;top:1060.15px;font-size:14px;color:#f2f2f2;letter-spacing:0.2px">7/6/2019</div>
<svg style="left:1868px;top:1045px;" width="28" height="28" viewBox="0 0 28 28"><path d="M2 1H22V16H10L6 20V16H2Z" fill="#f2f2f2"/><path d="M5 5H19M5 8H19M5 11H15" stroke="#333" stroke-width="1.2"/><circle cx="19" cy="19" r="7.5" fill="#2b1f1d" stroke="#f2f2f2" stroke-width="1.2"/><text x="16" y="23.5" font-family="Liberation Sans" font-size="11" fill="#f2f2f2">1</text></svg>
<div class="ab" style="left:1915px;top:1030px;width:1px;height:50px;background:#5a4a48;"></div>
<div class="ab" style="left:485px;top:314px;width:536px;height:399px;background:rgba(0,0,0,0.18);filter:blur(3px)"></div>
<div class="ab" style="left:482px;top:310px;width:536px;height:399px;background:#eeedf0;border:1px solid #4a4a4a"></div>
<div class="ab" style="left:483px;top:311px;width:534px;height:31px;background:#ffffff;"></div>
<div class="t" style="left:486px;top:319.3px;font-size:15px;color:#000;">New</div>
<svg style="left:990px;top:320px;" width="13" height="13" viewBox="0 0 13 13"><path d="M0.5 0.5L12.5 12.5M12.5 0.5L0.5 12.5" stroke="#000" stroke-width="1.1"/></svg>
<div class="t" style="left:336px;top:356.44px;width:300px;text-align:right;font-size:12px;color:#000">Name:</div>
<div class="ab" style="left:641px;top:352px;width:242px;height:20px;background:#ffffff;border:1px solid #7a7a7a"></div>
<div class="t" style="left:647px;top:356.74px;font-size:12px;color:#000;">Untitled-1</div>
<div class="ab" style="left:494px;top:384px;width:13px;height:1px;background:#c8c8c8;"></div>
<div class="ab" style="left:825px;top:384px;width:55px;height:1px;background:#c8c8c8;"></div>
<div class="ab" style="left:494px;top:384px;width:1px;height:311px;background:#c8c8c8;"></div>
<div class="ab" style="left:879px;top:384px;width:1px;height:311px;background:#c8c8c8;"></div>
<div class="ab" style="left:494px;top:694px;width:386px;height:1px;background:#c8c8c8;"></div>
<div class="ab" style="left:495px;top:385px;width:1px;height:309px;background:#ffffff;"></div>
<div class="ab" style="left:880px;top:384px;width:1px;height:312px;background:#ffffff;"></div>
<div class="ab" style="left:494px;top:695px;width:387px;height:1px;background:#ffffff;"></div>
<div class="t" style="left:265px;top:382.44px;width:300px;text-align:right;font-size:12px;color:#000">Preset:</div>
<div class="ab" style="left:569px;top:376px;width:250px;height:24px;background:#ffffff;border:1px solid #7a7a7a"></div>
<div class="t" style="left:576px;top:382.74px;font-size:12px;color:#000;">C:\Users\Mr. Mendelli\Desktop\Steam...</div>
<svg style="left:805px;top:386px;" width="10" height="6" viewBox="0 0 10 6"><path d="M0.5 0.5L5 5L9.5 0.5" fill="none" stroke="#333" stroke-width="1.1"/></svg>
<div class="t" style="left:336px;top:413.44px;width:300px;text-align:right;font-size:12px;color:#a0a0a0">Size:</div>
<div class="ab" style="left:641px;top:408px;width:232px;height:22px;background:#f3f3f3;border:1px solid #cfcfcf"></div>
<svg style="left:859px;top:417px;" width="10" height="6" viewBox="0 0 10 6"><path d="M0.5 0.5L5 5L9.5 0.5" fill="none" stroke="#a8a8a8" stroke-width="1.1"/></svg>
<div class="ab" style="left:858px;top:409px;width:14px;height:20px;background:#f3f3f3;border-left:1px solid #e0e0e0"></div>
<svg style="left:859px;top:417px;" width="10" height="6" viewBox="0 0 10 6"><path d="M0.5 0.5L5 5L9.5 0.5" fill="none" stroke="#b0b0b0" stroke-width="1.1"/></svg>
<div class="t" style="left:336px;top:443.44px;width:300px;text-align:right;font-size:12px;color:#000">Width:</div>
<div class="ab" style="left:641px;top:439px;width:98px;height:20px;background:#ffffff;border:1px solid #7a7a7a"></div>
<div class="t" style="left:647px;top:443.74px;font-size:12px;color:#000;">12.778</div>
<div class="ab" style="left:743px;top:439px;width:130px;height:20px;background:#ffffff;border:1px solid #7a7a7a"></div>
<div class="t" style="left:750px;top:443.74px;font-size:12px;color:#000;">Inches</div>
<svg style="left:859px;top:447px;" width="10" height="6" viewBox="0 0 10 6"><path d="M0.5 0.5L5 5L9.5 0.5" fill="none" stroke="#333" stroke-width="1.1"/></svg>
<div class="t" style="left:336px;top:473.44px;width:300px;text-align:right;font-size:12px;color:#000">Height:</div>
<div class="ab" style="left:641px;top:469px;width:98px;height:20px;background:#ffffff;border:1px solid #7a7a7a"></div>
<div class="t" style="left:647px;top:473.74px;font-size:12px;color:#000;">5.972</div>
<div class="ab" style="left:743px;top:469px;width:130px;height:20px;background:#ffffff;border:1px solid #7a7a7a"></div>
<div class="t" style="left:750px;top:473.74px;font-size:12px;color:#000;">Inches</div>
<svg style="left:859px;top:477px;" width="10" height="6" viewBox="0 0 10 6"><path d="M0.5 0.5L5 5L9.5 0.5" fill="none" stroke="#333" stroke-width="1.1"/></svg>
<div class="t" style="left:336px;top:503.44px;width:300px;text-align:right;font-size:12px;color:#000">Resolution:</div>
<div class="ab" style="left:641px;top:499px;width:98px;height:20px;background:#ffffff;border:1px solid #7a7a7a"></div>
<div class="t" style="left:647px;top:503.74px;font-size:12px;color:#000;">72</div>
<div class="ab" style="left:743px;top:499px;width:130px;height:20px;background:#ffffff;border:1px solid #7a7a7a"></div>
<div class="t" style="left:750px;top:503.74px;font-size:12px;color:#000;">Pixels/Inch</div>
<svg style="left:859px;top:507px;" width="10" height="6" viewBox="0 0 10 6"><path d="M0.5 0.5L5 5L9.5 0.5" fill="none" stroke="#333" stroke-width="1.1"/></svg>
<div class="t" style="left:336px;top:533.44px;width:300px;text-align:right;font-size:12px;color:#000">Color Mode:</div>
<div class="ab" style="left:641px;top:528px;width:95px;height:21px;background:#ffffff;border:1px solid #7a7a7a"></div>
<div class="t" style="left:647px;top:533.24px;font-size:12px;color:#000;">RGB Color</div>
<svg style="left:722px;top:536px;" width="10" height="6" viewBox="0 0 10 6"><path d="M0.5 0.5L5 5L9.5 0.5" fill="none" stroke="#333" stroke-width="1.1"/></svg>
<div class="ab" style="left:744px;top:528px;width:129px;height:21px;background:#ffffff;border:1px solid #7a7a7a"></div>
<div class="t" style="left:750px;top:533.24px;font-size:12px;color:#000;">8 bit</div>
<svg style="left:859px;top:536px;" width="10" height="6" viewBox="0 0 10 6"><path d="M0.5 0.5L5 5L9.5 0.5" fill="none" stroke="#333" stroke-width="1.1"/></svg>
<div class="t" style="left:336px;top:563.44px;width:300px;text-align:right;font-size:12px;color:#000">Background Contents:</div>
<div class="ab" style="left:641px;top:558px;width:232px;height:21px;background:#ffffff;border:1px solid #7a7a7a"></div>
<div class="t" style="left:648px;top:563.24px;font-size:12px;color:#000;">Transparent</div>
<svg style="left:859px;top:566px;" width="10" height="6" viewBox="0 0 10 6"><path d="M0.5 0.5L5 5L9.5 0.5" fill="none" stroke="#333" stroke-width="1.1"/></svg>
<svg style="left:514px;top:599px;" width="17" height="17" viewBox="0 0 17 17"><defs><linearGradient id="adv" x1="0" y1="0" x2="0" y2="1"><stop offset="0" stop-color="#ffffff"/><stop offset="1" stop-color="#dcdcdc"/></linearGradient></defs><circle cx="8.5" cy="8.5" r="7.5" fill="url(#adv)" stroke="#bdbdbd"/><path d="M5 8L8.5 4.5L12 8M5 11.5L8.5 8L12 11.5" fill="none" stroke="#333" stroke-width="1.2"/></svg>
<div class="t" style="left:537px;top:601.34px;font-size:12px;color:#000;">Advanced</div>
<div class="ab" style="left:596px;top:607px;width:267px;height:1px;background:#cdcdcd;"></div>
<div class="t" style="left:336px;top:641.44px;width:300px;text-align:right;font-size:12px;color:#000">Color Profile:</div>
<div class="ab" style="left:641px;top:636px;width:232px;height:21px;background:#ffffff;border:1px solid #7a7a7a"></div>
<div class="t" style="left:647px;top:641.24px;font-size:12px;color:#000;">sRGB IEC61966-2.1</div>
<svg style="left:859px;top:644px;" width="10" height="6" viewBox="0 0 10 6"><path d="M0.5 0.5L5 5L9.5 0.5" fill="none" stroke="#333" stroke-width="1.1"/></svg>
<div class="t" style="left:336px;top:671.44px;width:300px;text-align:right;font-size:12px;color:#000">Pixel Aspect Ratio:</div>
<div class="ab" style="left:641px;top:666px;width:232px;height:21px;background:#ffffff;border:1px solid #7a7a7a"></div>
<div class="t" style="left:647px;top:671.24px;font-size:12px;color:#000;">Square Pixels</div>
<svg style="left:859px;top:674px;" width="10" height="6" viewBox="0 0 10 6"><path d="M0.5 0.5L5 5L9.5 0.5" fill="none" stroke="#333" stroke-width="1.1"/></svg>
<div class="ab" style="left:899px;top:353px;width:107px;height:18px;background:#e1e1e1;border:2px solid #0078d7"></div>
<div class="t" style="left:899px;top:356.5px;width:107px;text-align:center;font-size:12px;line-height:13px;color:#000">OK</div>
<div class="ab" style="left:899px;top:381px;width:107px;height:18px;background:#e1e1e1;border:1px solid #adadad"></div>
<div class="t" style="left:899px;top:384.5px;width:107px;text-align:center;font-size:12px;line-height:13px;color:#000">Cancel</div>
<div class="ab" style="left:899px;top:409px;width:107px;height:18px;background:#e1e1e1;border:1px solid #adadad"></div>
<div class="t" style="left:899px;top:412.5px;width:107px;text-align:center;font-size:12px;line-height:13px;color:#000">Save Preset...</div>
<div class="ab" style="left:899px;top:437px;width:107px;height:18px;background:#cccccc;border:1px solid #bfbfbf"></div>
<div class="t" style="left:899px;top:440.5px;width:107px;text-align:center;font-size:12px;line-height:13px;color:#838383">Delete Preset...</div>
<div class="t" style="left:918px;top:573.84px;font-size:12px;color:#000;">Image Size:</div>
<div class="t" style="left:935px;top:597.84px;font-size:12px;color:#000;">1.13M</div>
<div class="ab" style="left:1085px;top:396px;width:418px;height:228px;background:rgba(0,0,0,0.18);filter:blur(3px)"></div>
<div class="ab" style="left:1082px;top:392px;width:418px;height:228px;background:#eeedf0;border:1px solid #4a4a4a"></div>
<div class="ab" style="left:1083px;top:393px;width:416px;height:31px;background:#ffffff;"></div>
<div class="t" style="left:1086px;top:400.8px;font-size:15px;color:#000;letter-spacing:-0.2px">New Document Preset</div>
<svg style="left:1472px;top:402px;" width="13" height="13" viewBox="0 0 13 13"><path d="M0.5 0.5L12.5 12.5M12.5 0.5L0.5 12.5" stroke="#000" stroke-width="1.1"/></svg>
<div class="t" style="left:1094px;top:438.34px;font-size:12px;color:#000;">Preset Name:</div>
<div class="ab" style="left:1172px;top:434px;width:225px;height:20px;background:#ffffff;border:1px solid #7a7a7a"></div>
<div class="t" style="left:1178px;top:438.34px;font-size:12px;color:#000;">Steam Grid</div>
<div class="ab" style="left:1412px;top:435px;width:76px;height:18px;background:#e1e1e1;border:2px solid #0078d7"></div>
<div class="t" style="left:1412px;top:438.5px;width:76px;text-align:center;font-size:12px;line-height:13px;color:#000">OK</div>
<div class="ab" style="left:1412px;top:463px;width:76px;height:18px;background:#e1e1e1;border:1px solid #adadad"></div>
<div class="t" style="left:1412px;top:466.5px;width:76px;text-align:center;font-size:12px;line-height:13px;color:#000">Cancel</div>
<div class="ab" style="left:1093px;top:470px;width:303px;height:1px;background:#c8c8c8;"></div>
<div class="ab" style="left:1093px;top:470px;width:1px;height:70px;background:#c8c8c8;"></div>
<div class="ab" style="left:1395px;top:470px;width:1px;height:70px;background:#c8c8c8;"></div>
<div class="ab" style="left:1093px;top:539px;width:303px;height:1px;background:#c8c8c8;"></div>
<div class="ab" style="left:1094px;top:471px;width:1px;height:68px;background:#fff;"></div>
<div class="ab" style="left:1396px;top:470px;width:1px;height:71px;background:#fff;"></div>
<div class="ab" style="left:1093px;top:540px;width:304px;height:1px;background:#fff;"></div>
<div class="ab" style="left:1108px;top:464px;width:157px;height:12px;background:#eeedf0;"></div>
<div class="t" style="left:1113px;top:464.33px;font-size:12.6px;color:#000;">Include in Saved Settings:</div>
<div class="ab" style="left:1103px;top:482px;width:15px;height:15px;background:#ffffff;border:1px solid #333"></div>
<svg style="left:1105.5px;top:485.5px;" width="10" height="9" viewBox="0 0 10 9"><path d="M0.5 4L3.5 7.5L9.5 0.8" fill="none" stroke="#222" stroke-width="1.2"/></svg>
<div class="t" style="left:1122px;top:484.34px;font-size:12px;color:#000;">Resolution</div>
<div class="ab" style="left:1194px;top:482px;width:15px;height:15px;background:#ffffff;border:1px solid #333"></div>
<svg style="left:1196.5px;top:485.5px;" width="10" height="9" viewBox="0 0 10 9"><path d="M0.5 4L3.5 7.5L9.5 0.8" fill="none" stroke="#222" stroke-width="1.2"/></svg>
<div class="t" style="left:1213px;top:484.34px;font-size:12px;color:#000;">Content</div>
<div class="ab" style="left:1103px;top:499px;width:15px;height:15px;background:#ffffff;border:1px solid #333"></div>
<svg style="left:1105.5px;top:502.5px;" width="10" height="9" viewBox="0 0 10 9"><path d="M0.5 4L3.5 7.5L9.5 0.8" fill="none" stroke="#222" stroke-width="1.2"/></svg>
<div class="t" style="left:1122px;top:501.34px;font-size:12px;color:#000;">Mode</div>
<div class="ab" style="left:1194px;top:499px;width:15px;height:15px;background:#ffffff;border:1px solid #333"></div>
<svg style="left:1196.5px;top:502.5px;" width="10" height="9" viewBox="0 0 10 9"><path d="M0.5 4L3.5 7.5L9.5 0.8" fill="none" stroke="#222" stroke-width="1.2"/></svg>
<div class="t" style="left:1213px;top:501.34px;font-size:12px;color:#000;">Profile</div>
<div class="ab" style="left:1103px;top:516px;width:15px;height:15px;background:#ffffff;border:1px solid #333"></div>
<svg style="left:1105.5px;top:519.5px;" width="10" height="9" viewBox="0 0 10 9"><path d="M0.5 4L3.5 7.5L9.5 0.8" fill="none" stroke="#222" stroke-width="1.2"/></svg>
<div class="t" style="left:1122px;top:518.34px;font-size:12px;color:#000;">Bit Depth</div>
<div class="ab" style="left:1194px;top:516px;width:15px;height:15px;background:#ffffff;border:1px solid #333"></div>
<svg style="left:1196.5px;top:519.5px;" width="10" height="9" viewBox="0 0 10 9"><path d="M0.5 4L3.5 7.5L9.5 0.8" fill="none" stroke="#222" stroke-width="1.2"/></svg>
<div class="t" style="left:1213px;top:518.34px;font-size:12px;color:#000;">Pixel Aspect Ratio</div>
<svg style="left:1096px;top:563px;" width="34" height="34" viewBox="0 0 34 34"><defs><radialGradient id="inf" cx="0.35" cy="0.3" r="0.8"><stop offset="0" stop-color="#ffffff"/><stop offset="0.6" stop-color="#b8d4f0"/><stop offset="1" stop-color="#4a7fc0"/></radialGradient></defs><path d="M17 2Q31 2 31 15Q31 27 18 28L14 33L13 28Q3 26 3 15Q3 2 17 2Z" fill="url(#inf)" stroke="#5a7fb0" stroke-width="0.8"/><circle cx="17" cy="8.5" r="2" fill="#1e3c8c"/><path d="M13 12H19V22H21V24H13V22H15V14H13Z" fill="#1e3c8c"/></svg>
<div class="t" style="left:1137px;top:550.5px;font-size:12.4px;color:#000;">Values not included in the saved preset will</div>
<div class="t" style="left:1137px;top:564.5px;font-size:12.4px;color:#000;">default to their last used value.</div>
<div class="t" style="left:1137px;top:578.5px;font-size:12.4px;color:#000;">Document profile will default to working space</div>
<div class="t" style="left:1137px;top:592.5px;font-size:12.4px;color:#000;">if not included in the saved preset.</div>
</body></html>
